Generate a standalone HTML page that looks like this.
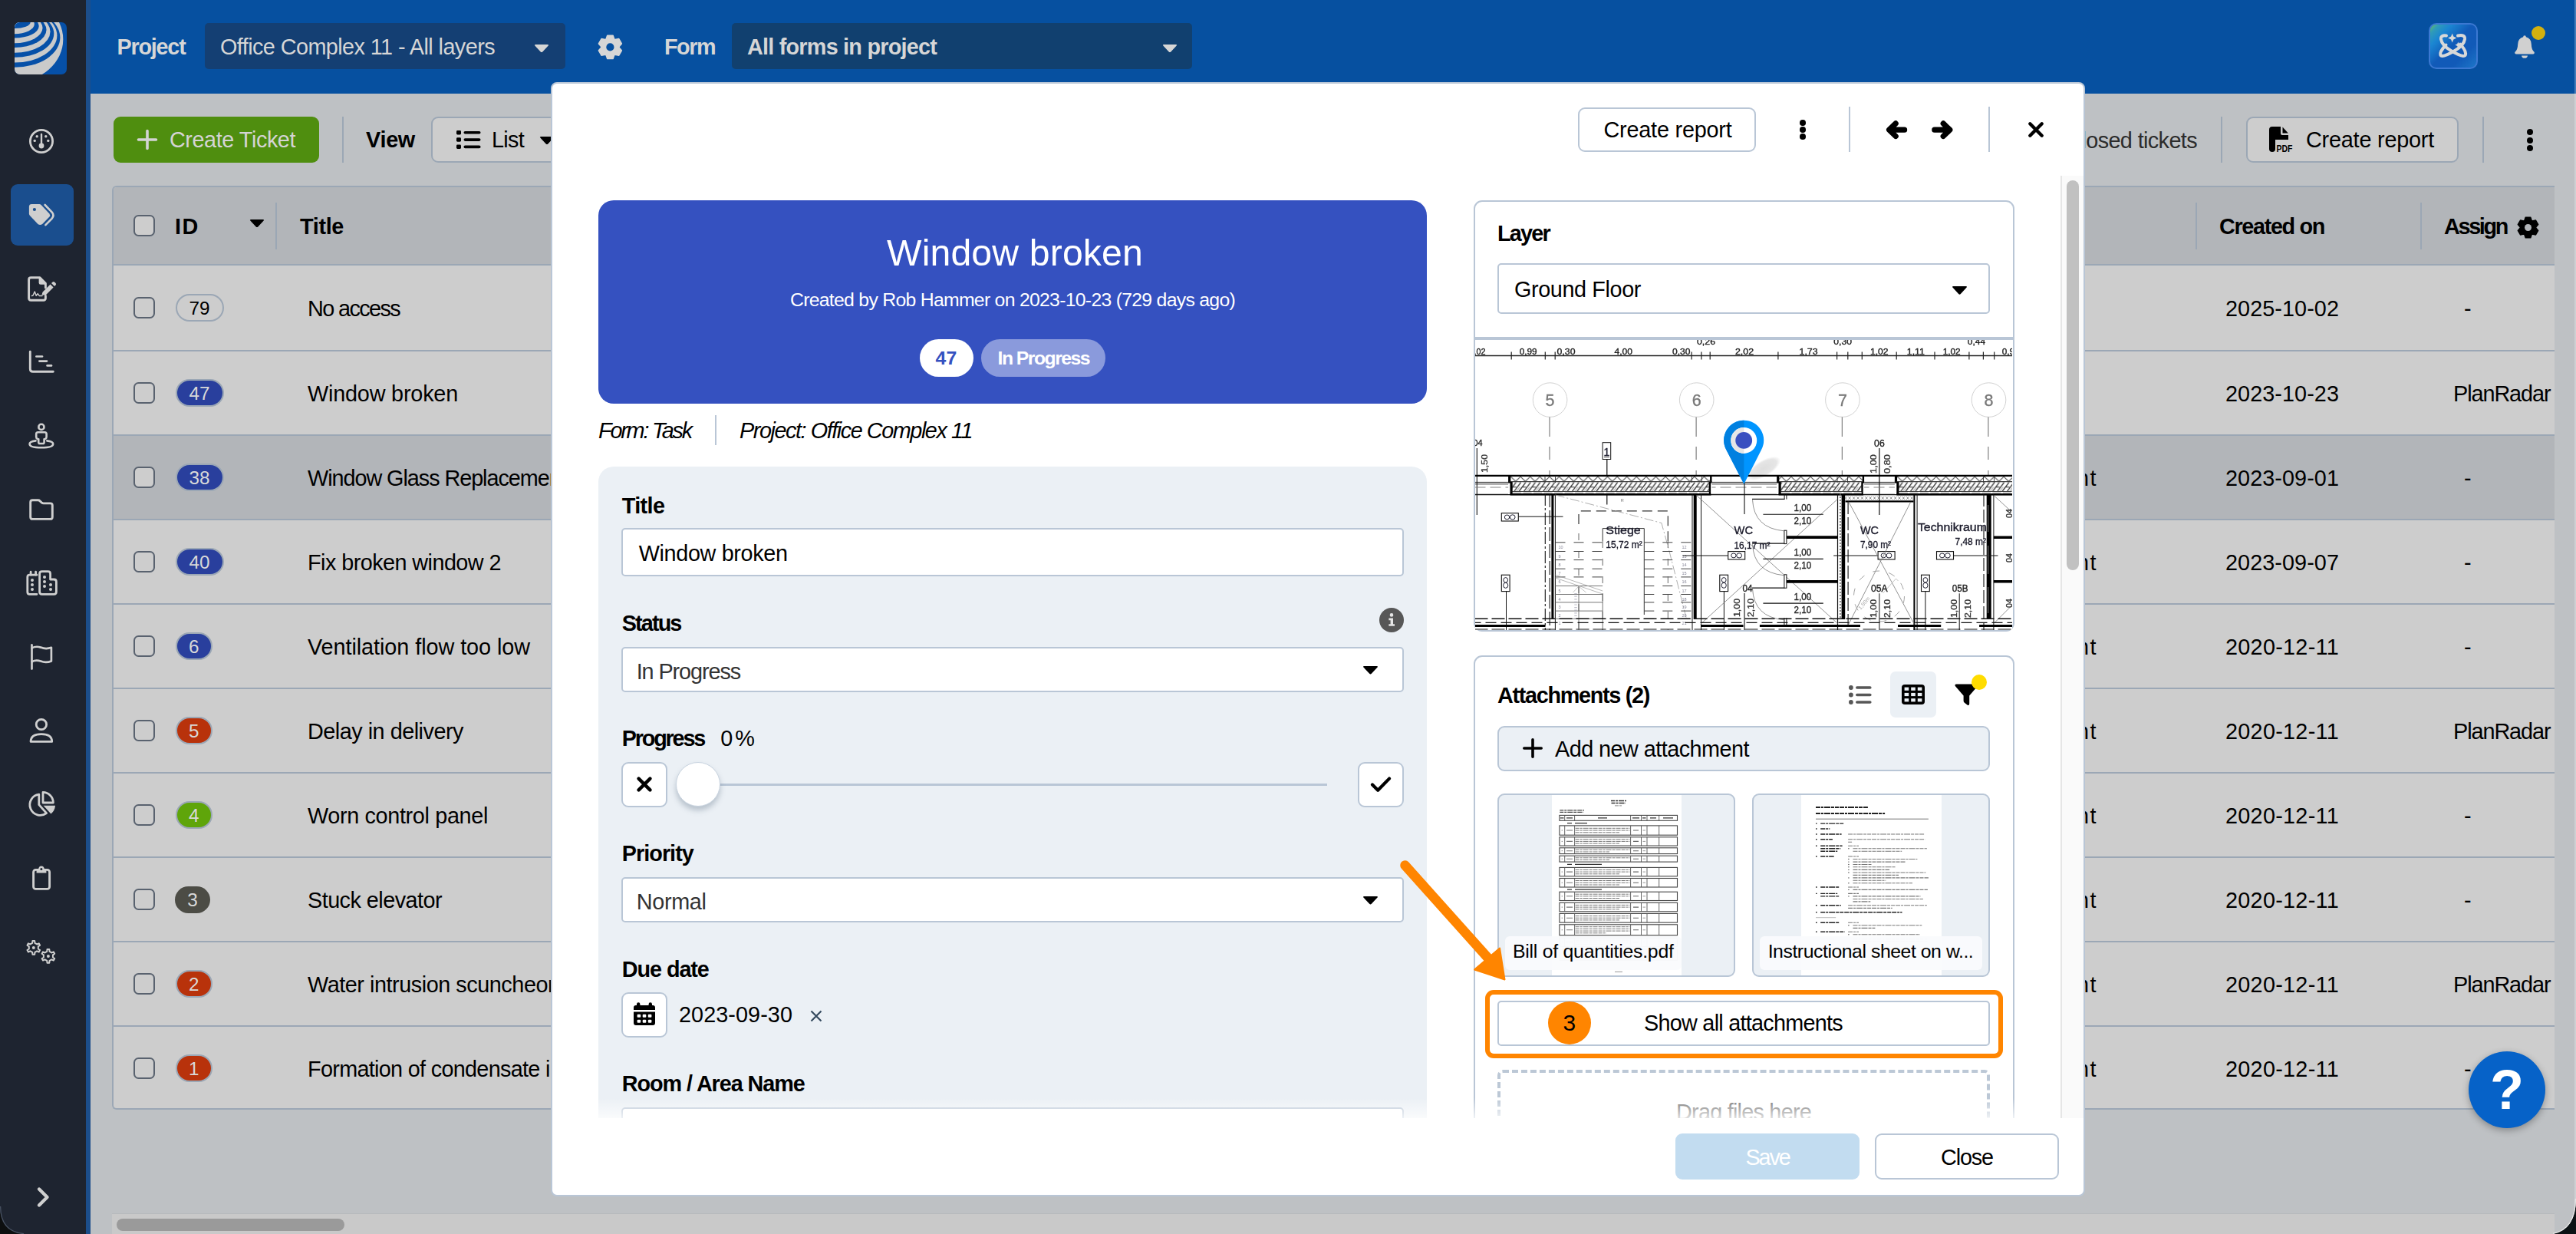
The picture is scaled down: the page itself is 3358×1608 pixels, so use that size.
<!DOCTYPE html>
<html><head><meta charset="utf-8"><title>Tickets</title>
<style>
html,body{margin:0;padding:0;}
body{width:3358px;height:1608px;overflow:hidden;position:relative;background:#bec1c4;font-family:"Liberation Sans", sans-serif;}
.a{position:absolute;box-sizing:border-box;}
.t{white-space:nowrap;}
svg{overflow:visible;}
</style></head><body>
<div class="a " style="left:118px;top:0px;width:3240px;height:122px;background:#0650a0;"></div>
<div class="a " style="left:148px;top:152px;width:268px;height:60px;background:#4f8e0f;border-radius:9px;"></div>
<svg class="a" style="left:179px;top:169px;" width="26" height="26" viewBox="0 0 26 26"><path d="M13 1.5V24.5M1.5 13H24.5" stroke="#d4d4d4" stroke-width="3.6" stroke-linecap="round"/></svg>
<span class="a t" id="t1" style="top:166.44px;font-size:28.8px;line-height:32.170px;color:#d4d4d4;left:221px;letter-spacing:-0.435px;">Create Ticket</span>
<div class="a " style="left:446px;top:152px;width:2px;height:60px;background:#9ba7b5;"></div>
<span class="a t" id="t2" style="top:166.44px;font-size:28.8px;line-height:32.170px;color:#000;left:477px;font-weight:700;letter-spacing:-0.277px;">View</span>
<div class="a " style="left:562px;top:152px;width:200px;height:60px;background:#cdcdcd;border:2px solid #9ba7b5;border-radius:9px;"></div>
<svg class="a" style="left:595px;top:169px;" width="32" height="26" viewBox="0 0 32 26"><g fill="#000"><rect x="0" y="1" width="6" height="5.4" rx="1.4"/><rect x="0" y="10.3" width="6" height="5.4" rx="1.4"/><rect x="0" y="19.6" width="6" height="5.4" rx="1.4"/><rect x="9.5" y="1.9" width="22" height="3.7" rx="1.8"/><rect x="9.5" y="11.2" width="22" height="3.7" rx="1.8"/><rect x="9.5" y="20.5" width="22" height="3.7" rx="1.8"/></g></svg>
<span class="a t" id="t3" style="top:166.44px;font-size:28.8px;line-height:32.170px;color:#000;left:641px;letter-spacing:-0.703px;">List</span>
<svg class="a" style="left:703px;top:177px;" width="20" height="12" viewBox="0 0 20 12"><path d="M2.2 1 H17.8 Q20 1 18.5 2.7 L11.3 10.4 Q10 11.8 8.7 10.4 L1.5 2.7 Q0 1 2.2 1Z" fill="#000"/></svg>
<span class="a t" id="t4" style="top:166.74px;font-size:28.8px;line-height:32.170px;color:#2c2c2c;left:2693.3px;letter-spacing:-0.611px;">Closed tickets</span>
<div class="a " style="left:2895px;top:152px;width:2px;height:60px;background:#9ba7b5;"></div>
<div class="a " style="left:2928px;top:152px;width:277px;height:60px;background:#cdcdcd;border:2px solid #9ba7b5;border-radius:9px;"></div>
<svg class="a" style="left:2958px;top:165px;" width="31" height="34" viewBox="0 0 31 34"><path d="M0 4 Q0 0 4 0 H15 V9 Q15 11 17 11 H25 V17 H0Z" fill="#000"/><path d="M17.5 0.5 L24.8 8.5 H17.5Z" fill="#000"/><path d="M0 17 H8 V29 Q8 33 4 33 Q0 33 0 29Z" fill="#000"/><text x="9.5" y="33" font-family="Liberation Sans, sans-serif" font-weight="700" font-size="13.5" fill="#000" textLength="21" lengthAdjust="spacingAndGlyphs">PDF</text></svg>
<span class="a t" id="t5" style="top:166.44px;font-size:28.8px;line-height:32.170px;color:#000;left:3006px;letter-spacing:-0.206px;">Create report</span>
<div class="a " style="left:3236px;top:152px;width:2px;height:60px;background:#9ba7b5;"></div>
<div class="a " style="left:3294px;top:168px;width:8px;height:8px;background:#000;border-radius:4px;"></div>
<div class="a " style="left:3294px;top:178.5px;width:8px;height:8px;background:#000;border-radius:4px;"></div>
<div class="a " style="left:3294px;top:189px;width:8px;height:8px;background:#000;border-radius:4px;"></div>
<div class="a " style="left:146px;top:242px;width:3184px;height:1204px;background:#cdcdcd;border:2px solid #9ba7b5;border-radius:6px 0 0 6px;border-right:none;overflow:hidden;"></div>
<div class="a " style="left:148px;top:244px;width:3182px;height:100px;background:#b2b5b9;border-radius:4px 0 0 0;"></div>
<div class="a " style="left:148px;top:344px;width:3182px;height:2px;background:#9ba7b5;"></div>
<div class="a " style="left:174.2px;top:280.2px;width:27.6px;height:27.6px;background:#cdcdcd;border:2px solid #59626f;border-radius:6.5px;"></div>
<span class="a t" id="t6" style="top:278.94px;font-size:28.8px;line-height:32.170px;color:#000;left:228px;font-weight:700;letter-spacing:1.594px;">ID</span>
<svg class="a" style="left:325px;top:285px;" width="20" height="12" viewBox="0 0 20 12"><path d="M2.2 1 H17.8 Q20 1 18.5 2.7 L11.3 10.4 Q10 11.8 8.7 10.4 L1.5 2.7 Q0 1 2.2 1Z" fill="#000"/></svg>
<div class="a " style="left:359px;top:264px;width:2px;height:61px;background:#9ba7b5;"></div>
<span class="a t" id="t7" style="top:278.94px;font-size:28.8px;line-height:32.170px;color:#000;left:391px;font-weight:700;letter-spacing:-0.338px;">Title</span>
<div class="a " style="left:2862px;top:264px;width:2px;height:61px;background:#9ba7b5;"></div>
<span class="a t" id="t8" style="top:278.94px;font-size:28.8px;line-height:32.170px;color:#000;left:2893px;font-weight:700;letter-spacing:-1.342px;">Created on</span>
<div class="a " style="left:3155px;top:264px;width:2px;height:61px;background:#9ba7b5;"></div>
<span class="a t" id="t9" style="top:278.94px;font-size:28.8px;line-height:32.170px;color:#000;left:3186px;font-weight:700;letter-spacing:-2.336px;">Assign</span>
<svg class="a" style="left:3281px;top:281.5px;" width="29" height="29" viewBox="0 0 100 100"><path d="M33.9 18.3 L38.9 3.8 L61.1 3.8 L66.1 18.3 L69.4 20.3 L84.5 17.3 L95.5 36.5 L85.4 48.1 L85.4 51.9 L95.5 63.5 L84.5 82.7 L69.4 79.7 L66.1 81.7 L61.1 96.2 L38.9 96.2 L33.9 81.7 L30.6 79.7 L15.5 82.7 L4.5 63.5 L14.6 51.9 L14.6 48.1 L4.5 36.5 L15.5 17.3 L30.6 20.3Z" fill="#000" stroke="#000" stroke-width="5" stroke-linejoin="round"/><circle cx="50" cy="50" r="15.5" fill="#b2b5b9"/></svg>
<div class="a " style="left:148px;top:456px;width:3182px;height:2px;background:#9ba7b5;"></div>
<div class="a " style="left:174.2px;top:387.2px;width:27.6px;height:27.6px;background:#cdcdcd;border:2px solid #59626f;border-radius:6.5px;"></div>
<div class="a " style="left:228.5px;top:382.8px;width:63px;height:36.4px;background:#cdcdcd;border:2px solid #9ba7b5;border-radius:18.5px;"></div>
<span class="a t" id="t10" style="top:388.01px;font-size:24.3px;line-height:27.143px;color:#000;left:260px;transform:translateX(-50%);">79</span>
<span class="a t" id="t11" style="top:385.54px;font-size:28.8px;line-height:32.170px;color:#000;left:401px;letter-spacing:-1.604px;">No access</span>
<span class="a t" id="t12" style="top:385.54px;font-size:28.8px;line-height:32.170px;color:#000;left:2901px;letter-spacing:0.069px;">2025-10-02</span>
<span class="a t" id="t13" style="top:385.54px;font-size:28.8px;line-height:32.170px;color:#000;left:3212px;letter-spacing:-1.594px;">-</span>
<div class="a " style="left:148px;top:566px;width:3182px;height:2px;background:#9ba7b5;"></div>
<div class="a " style="left:174.2px;top:498.2px;width:27.6px;height:27.6px;background:#cdcdcd;border:2px solid #59626f;border-radius:6.5px;"></div>
<div class="a " style="left:228.5px;top:493.8px;width:63px;height:36.4px;background:#293f9d;border:2px solid #9ba7b5;border-radius:18.5px;"></div>
<span class="a t" id="t14" style="top:499.01px;font-size:24.3px;line-height:27.143px;color:#d8d8d8;left:260px;transform:translateX(-50%);">47</span>
<span class="a t" id="t15" style="top:496.54px;font-size:28.8px;line-height:32.170px;color:#000;left:401px;letter-spacing:-0.191px;">Window broken</span>
<span class="a t" id="t16" style="top:496.54px;font-size:28.8px;line-height:32.170px;color:#000;left:2901px;letter-spacing:0.069px;">2023-10-23</span>
<span class="a t" id="t17" style="top:496.54px;font-size:28.8px;line-height:32.170px;color:#000;left:3198px;letter-spacing:-1.064px;">PlanRadar</span>
<div class="a " style="left:148px;top:568px;width:3182px;height:108px;background:#b2b5b9;"></div>
<div class="a " style="left:148px;top:676px;width:3182px;height:2px;background:#9ba7b5;"></div>
<div class="a " style="left:174.2px;top:608.2px;width:27.6px;height:27.6px;background:#cdcdcd;border:2px solid #59626f;border-radius:6.5px;"></div>
<div class="a " style="left:228.5px;top:603.8px;width:63px;height:36.4px;background:#293f9d;border:2px solid #9ba7b5;border-radius:18.5px;"></div>
<span class="a t" id="t18" style="top:609.01px;font-size:24.3px;line-height:27.143px;color:#d8d8d8;left:260px;transform:translateX(-50%);">38</span>
<span class="a t" style="top:606.54px;font-size:28.8px;line-height:32.170px;color:#000;left:401px;letter-spacing:-1.046px;"><span id="t19">Window Glass Replaceme</span>nt</span>
<span class="a t" id="t20" style="top:606.54px;font-size:28.8px;line-height:32.170px;color:#000;left:2707px;letter-spacing:1.484px;">nt</span>
<span class="a t" id="t21" style="top:606.54px;font-size:28.8px;line-height:32.170px;color:#000;left:2901px;letter-spacing:0.069px;">2023-09-01</span>
<span class="a t" id="t22" style="top:606.54px;font-size:28.8px;line-height:32.170px;color:#000;left:3212px;letter-spacing:-1.594px;">-</span>
<div class="a " style="left:148px;top:786px;width:3182px;height:2px;background:#9ba7b5;"></div>
<div class="a " style="left:174.2px;top:718.2px;width:27.6px;height:27.6px;background:#cdcdcd;border:2px solid #59626f;border-radius:6.5px;"></div>
<div class="a " style="left:228.5px;top:713.8px;width:63px;height:36.4px;background:#293f9d;border:2px solid #9ba7b5;border-radius:18.5px;"></div>
<span class="a t" id="t23" style="top:719.01px;font-size:24.3px;line-height:27.143px;color:#d8d8d8;left:260px;transform:translateX(-50%);">40</span>
<span class="a t" id="t24" style="top:716.54px;font-size:28.8px;line-height:32.170px;color:#000;left:401px;letter-spacing:-0.553px;">Fix broken window 2</span>
<span class="a t" id="t25" style="top:716.54px;font-size:28.8px;line-height:32.170px;color:#000;left:2707px;letter-spacing:1.484px;">nt</span>
<span class="a t" id="t26" style="top:716.54px;font-size:28.8px;line-height:32.170px;color:#000;left:2901px;letter-spacing:0.069px;">2023-09-07</span>
<span class="a t" id="t27" style="top:716.54px;font-size:28.8px;line-height:32.170px;color:#000;left:3212px;letter-spacing:-1.594px;">-</span>
<div class="a " style="left:148px;top:896px;width:3182px;height:2px;background:#9ba7b5;"></div>
<div class="a " style="left:174.2px;top:828.2px;width:27.6px;height:27.6px;background:#cdcdcd;border:2px solid #59626f;border-radius:6.5px;"></div>
<div class="a " style="left:228.5px;top:823.8px;width:48.5px;height:36.4px;background:#293f9d;border:2px solid #9ba7b5;border-radius:18.5px;"></div>
<span class="a t" id="t28" style="top:829.01px;font-size:24.3px;line-height:27.143px;color:#d8d8d8;left:252.75px;transform:translateX(-50%);">6</span>
<span class="a t" id="t29" style="top:826.54px;font-size:28.8px;line-height:32.170px;color:#000;left:401px;letter-spacing:-0.056px;">Ventilation flow too low</span>
<span class="a t" id="t30" style="top:826.54px;font-size:28.8px;line-height:32.170px;color:#000;left:2707px;letter-spacing:1.484px;">nt</span>
<span class="a t" id="t31" style="top:826.54px;font-size:28.8px;line-height:32.170px;color:#000;left:2901px;letter-spacing:0.283px;">2020-12-11</span>
<span class="a t" id="t32" style="top:826.54px;font-size:28.8px;line-height:32.170px;color:#000;left:3212px;letter-spacing:-1.594px;">-</span>
<div class="a " style="left:148px;top:1006px;width:3182px;height:2px;background:#9ba7b5;"></div>
<div class="a " style="left:174.2px;top:938.2px;width:27.6px;height:27.6px;background:#cdcdcd;border:2px solid #59626f;border-radius:6.5px;"></div>
<div class="a " style="left:228.5px;top:933.8px;width:48.5px;height:36.4px;background:#b8320b;border:2px solid #9ba7b5;border-radius:18.5px;"></div>
<span class="a t" id="t33" style="top:939.01px;font-size:24.3px;line-height:27.143px;color:#d8d8d8;left:252.75px;transform:translateX(-50%);">5</span>
<span class="a t" id="t34" style="top:936.54px;font-size:28.8px;line-height:32.170px;color:#000;left:401px;letter-spacing:-0.487px;">Delay in delivery</span>
<span class="a t" id="t35" style="top:936.54px;font-size:28.8px;line-height:32.170px;color:#000;left:2707px;letter-spacing:1.484px;">nt</span>
<span class="a t" id="t36" style="top:936.54px;font-size:28.8px;line-height:32.170px;color:#000;left:2901px;letter-spacing:0.283px;">2020-12-11</span>
<span class="a t" id="t37" style="top:936.54px;font-size:28.8px;line-height:32.170px;color:#000;left:3198px;letter-spacing:-1.064px;">PlanRadar</span>
<div class="a " style="left:148px;top:1116px;width:3182px;height:2px;background:#9ba7b5;"></div>
<div class="a " style="left:174.2px;top:1048.2px;width:27.6px;height:27.6px;background:#cdcdcd;border:2px solid #59626f;border-radius:6.5px;"></div>
<div class="a " style="left:228.5px;top:1043.8px;width:48.5px;height:36.4px;background:#5fa50a;border:2px solid #9ba7b5;border-radius:18.5px;"></div>
<span class="a t" id="t38" style="top:1049.01px;font-size:24.3px;line-height:27.143px;color:#d8d8d8;left:252.75px;transform:translateX(-50%);">4</span>
<span class="a t" id="t39" style="top:1046.54px;font-size:28.8px;line-height:32.170px;color:#000;left:401px;letter-spacing:-0.344px;">Worn control panel</span>
<span class="a t" id="t40" style="top:1046.54px;font-size:28.8px;line-height:32.170px;color:#000;left:2707px;letter-spacing:1.484px;">nt</span>
<span class="a t" id="t41" style="top:1046.54px;font-size:28.8px;line-height:32.170px;color:#000;left:2901px;letter-spacing:0.283px;">2020-12-11</span>
<span class="a t" id="t42" style="top:1046.54px;font-size:28.8px;line-height:32.170px;color:#000;left:3212px;letter-spacing:-1.594px;">-</span>
<div class="a " style="left:148px;top:1226px;width:3182px;height:2px;background:#9ba7b5;"></div>
<div class="a " style="left:174.2px;top:1158.2px;width:27.6px;height:27.6px;background:#cdcdcd;border:2px solid #59626f;border-radius:6.5px;"></div>
<div class="a " style="left:228px;top:1154.5px;width:46px;height:35px;background:#4c4c45;border-radius:17.5px;"></div>
<span class="a t" id="t43" style="top:1159.01px;font-size:24.3px;line-height:27.143px;color:#d8d8d8;left:251px;transform:translateX(-50%);">3</span>
<span class="a t" id="t44" style="top:1156.54px;font-size:28.8px;line-height:32.170px;color:#000;left:401px;letter-spacing:-0.535px;">Stuck elevator</span>
<span class="a t" id="t45" style="top:1156.54px;font-size:28.8px;line-height:32.170px;color:#000;left:2707px;letter-spacing:1.484px;">nt</span>
<span class="a t" id="t46" style="top:1156.54px;font-size:28.8px;line-height:32.170px;color:#000;left:2901px;letter-spacing:0.283px;">2020-12-11</span>
<span class="a t" id="t47" style="top:1156.54px;font-size:28.8px;line-height:32.170px;color:#000;left:3212px;letter-spacing:-1.594px;">-</span>
<div class="a " style="left:148px;top:1336px;width:3182px;height:2px;background:#9ba7b5;"></div>
<div class="a " style="left:174.2px;top:1268.2px;width:27.6px;height:27.6px;background:#cdcdcd;border:2px solid #59626f;border-radius:6.5px;"></div>
<div class="a " style="left:228.5px;top:1263.8px;width:48.5px;height:36.4px;background:#b8320b;border:2px solid #9ba7b5;border-radius:18.5px;"></div>
<span class="a t" id="t48" style="top:1269.01px;font-size:24.3px;line-height:27.143px;color:#d8d8d8;left:252.75px;transform:translateX(-50%);">2</span>
<span class="a t" style="top:1266.54px;font-size:28.8px;line-height:32.170px;color:#000;left:401px;letter-spacing:-0.452px;"><span id="t49">Water intrusion scuncheo</span>n</span>
<span class="a t" id="t50" style="top:1266.54px;font-size:28.8px;line-height:32.170px;color:#000;left:2707px;letter-spacing:1.484px;">nt</span>
<span class="a t" id="t51" style="top:1266.54px;font-size:28.8px;line-height:32.170px;color:#000;left:2901px;letter-spacing:0.283px;">2020-12-11</span>
<span class="a t" id="t52" style="top:1266.54px;font-size:28.8px;line-height:32.170px;color:#000;left:3198px;letter-spacing:-1.064px;">PlanRadar</span>
<div class="a " style="left:174.2px;top:1378.2px;width:27.6px;height:27.6px;background:#cdcdcd;border:2px solid #59626f;border-radius:6.5px;"></div>
<div class="a " style="left:228.5px;top:1373.8px;width:48.5px;height:36.4px;background:#b8320b;border:2px solid #9ba7b5;border-radius:18.5px;"></div>
<span class="a t" id="t53" style="top:1379.01px;font-size:24.3px;line-height:27.143px;color:#d8d8d8;left:252.75px;transform:translateX(-50%);">1</span>
<span class="a t" style="top:1376.54px;font-size:28.8px;line-height:32.170px;color:#000;left:401px;letter-spacing:-0.690px;"><span id="t54">Formation of condensate i</span>n the</span>
<span class="a t" id="t55" style="top:1376.54px;font-size:28.8px;line-height:32.170px;color:#000;left:2707px;letter-spacing:1.484px;">nt</span>
<span class="a t" id="t56" style="top:1376.54px;font-size:28.8px;line-height:32.170px;color:#000;left:2901px;letter-spacing:0.283px;">2020-12-11</span>
<span class="a t" id="t57" style="top:1376.54px;font-size:28.8px;line-height:32.170px;color:#000;left:3212px;letter-spacing:-1.594px;">-</span>
<div class="a " style="left:146px;top:1581px;width:3184px;height:27px;background:#c9c9c9;border-top:1px solid #b6b9bc;"></div>
<div class="a " style="left:152px;top:1588px;width:297px;height:16px;background:#9a9a9a;border-radius:8px;"></div>
<div class="a " style="left:3218px;top:1370px;width:100px;height:100px;background:#0662c8;border-radius:50px;box-shadow:0 3px 10px rgba(0,0,0,.3);"></div>
<span class="a t" id="t58" style="top:1379.84px;font-size:72px;line-height:80.424px;color:#fff;left:3268px;transform:translateX(-50%);font-weight:700;">?</span>
<div class="a " style="left:0px;top:0px;width:112px;height:1608px;background:#1e2430;"></div>
<div class="a " style="left:112px;top:0px;width:6px;height:1608px;background:#1c4e8b;"></div>
<div class="a " style="left:14px;top:240px;width:82px;height:80px;background:#1a4e8e;border-radius:9px;"></div>
<svg class="a" style="left:19px;top:29px;" width="68" height="68" viewBox="0 0 68 68"><defs><clipPath id="lg"><rect x="0" y="0" width="68" height="68" rx="7"/></clipPath></defs><g clip-path="url(#lg)"><rect width="68" height="68" fill="#0650a8"/><ellipse cx="0" cy="22.3" rx="63.3" ry="55.4" fill="#cacaca"/><ellipse cx="0" cy="19.8" rx="59.4" ry="39" fill="#0650a8"/><ellipse cx="0" cy="17.3" rx="55.4" ry="35.3" fill="#cacaca"/><ellipse cx="0" cy="14.8" rx="51.3" ry="31" fill="#0650a8"/><ellipse cx="0" cy="12.3" rx="46.5" ry="27.5" fill="#cacaca"/><ellipse cx="0" cy="10" rx="41.5" ry="23" fill="#0650a8"/><ellipse cx="0" cy="7.5" rx="36.5" ry="19.8" fill="#cacaca"/><ellipse cx="0" cy="5" rx="31.7" ry="15.5" fill="#0650a8"/><ellipse cx="0" cy="2.5" rx="25.8" ry="12.7" fill="#cacaca"/><ellipse cx="0" cy="0" rx="20.7" ry="8.0" fill="#0650a8"/></g></svg>
<svg class="a" style="left:36px;top:166px;" width="36" height="36" viewBox="0 0 36 36"><g fill="none" stroke="#cfcfcf"><circle cx="18" cy="18" r="14.6" stroke-width="2.8"/><path d="M18 9V22" stroke-width="2.4" stroke-linecap="round"/></g><g fill="#cfcfcf"><circle cx="18" cy="24" r="3.4"/><circle cx="9.2" cy="17.4" r="1.7"/><circle cx="12.2" cy="11.7" r="1.7"/><circle cx="23.8" cy="11.7" r="1.7"/><circle cx="26.8" cy="17.4" r="1.7"/></g></svg>
<svg class="a" style="left:30px;top:260px;" width="48" height="40" viewBox="0 0 48 40"><path d="M7.9 9.4 Q7.9 6 11.3 6 H21.3 Q22.6 6 23.6 7 L34.4 18.6 Q36 20.6 34.4 22.6 L25.2 32 Q22.3 34.2 19.4 32 L9 21 Q7.9 19.8 7.9 18.3Z" fill="#cfcfcf"/><circle cx="14.9" cy="13" r="2.1" fill="#1a4e8e"/><path d="M28.6 7 L37.8 16.6 Q41.2 20.6 37.6 24.8 L29.4 33.2" fill="none" stroke="#cfcfcf" stroke-width="2.6" stroke-linecap="round"/></svg>
<svg class="a" style="left:30px;top:355px;" width="48" height="42" viewBox="0 0 48 42"><g fill="none" stroke="#cfcfcf" stroke-width="2.9" stroke-linejoin="round" stroke-linecap="round"><path d="M29.4 30.5 V33.5 Q29.4 36.2 26.7 36.2 H10.3 Q7.6 36.2 7.6 33.5 V9.5 Q7.6 6.8 10.3 6.8 H22 L29.4 14.2 V20"/></g><path d="M20.6 6.8 H22 L29.4 14.2 V15.8 H23 Q20.6 15.8 20.6 13.4Z" fill="#cfcfcf"/><path d="M11.5 30.5 L13 30 L15.2 25 L17.2 30.2 L19.2 27.6 L21.2 30.4 H25" fill="none" stroke="#cfcfcf" stroke-width="1.5" stroke-linejoin="round" stroke-linecap="round"/><path d="M24.4 29.6 L25.6 25.4 L35.6 15.4 L39.6 19.4 L29.6 29.4Z M37 14 L38.6 12.4 Q39.8 11.4 41 12.4 L42.6 14 Q43.6 15.2 42.6 16.4 L41 18Z" fill="#cfcfcf"/></svg>
<svg class="a" style="left:30px;top:450px;" width="48" height="42" viewBox="0 0 48 42"><path d="M9.3 8.2 V30.8 Q9.3 34.3 12.8 34.3 H39.3" fill="none" stroke="#cfcfcf" stroke-width="2.9" stroke-linecap="round"/><g stroke="#cfcfcf" stroke-width="2.7" stroke-linecap="round"><path d="M17.4 14.5H25"/><path d="M21.4 20.6H31"/><path d="M31.6 26.4H37"/></g></svg>
<svg class="a" style="left:30px;top:545px;" width="48" height="42" viewBox="0 0 48 42"><g fill="none" stroke="#cfcfcf" stroke-width="2.6"><circle cx="23.9" cy="11.4" r="3.6"/><path d="M19.6 18.2 H28.2 Q30.6 18.2 30.6 20.6 V24.6 Q30.6 26.4 28.8 27 L27.6 27.4 V31.2 Q27.6 33 25.8 33 H22 Q20.2 33 20.2 31.2 V27.4 L19 27 Q17.2 26.4 17.2 24.6 V20.6 Q17.2 18.2 19.6 18.2Z"/><path d="M16.5 29.4 Q8.6 30.4 8.6 33.4 Q8.6 38.2 23.9 38.2 Q39.2 38.2 39.2 33.4 Q39.2 30.4 31.3 29.4" stroke-linecap="round"/></g></svg>
<svg class="a" style="left:30px;top:640px;" width="48" height="42" viewBox="0 0 48 42"><path d="M12.4 11.8 H19.8 Q21 11.8 21.8 12.6 L24.6 15.2 Q25.4 15.9 26.6 15.9 H35.6 Q38.3 15.9 38.3 18.6 V33.7 Q38.3 36.4 35.6 36.4 H12.4 Q9.7 36.4 9.7 33.7 V14.5 Q9.7 11.8 12.4 11.8Z" fill="none" stroke="#cfcfcf" stroke-width="2.9" stroke-linejoin="round"/></svg>
<svg class="a" style="left:30px;top:738px;" width="48" height="42" viewBox="0 0 48 42"><g fill="none" stroke="#cfcfcf" stroke-width="2.8" stroke-linejoin="round" stroke-linecap="round"><path d="M18 36.3 H8.6 Q5.8 36.3 5.8 33.5 V14 Q5.8 11.2 8.6 11.2 H18"/><path d="M10.1 11V7.2M16.6 11V7.2"/><path d="M24.6 6.6 H32.6 Q35.6 6.6 35.6 9.6 V17 H40.4 Q43.4 17 43.4 20 V33.3 Q43.4 36.3 40.4 36.3 H24.6 Q21.6 36.3 21.6 33.3 V9.6 Q21.6 6.6 24.6 6.6Z"/></g><g fill="#cfcfcf"><circle cx="12" cy="18.1" r="2"/><circle cx="12" cy="24.1" r="2"/><circle cx="12" cy="30.1" r="2"/><circle cx="28" cy="13.9" r="2"/><circle cx="28" cy="20" r="2"/><circle cx="28" cy="26" r="2"/><circle cx="36" cy="24" r="2"/><circle cx="36" cy="30" r="2"/></g></svg>
<svg class="a" style="left:30px;top:834px;" width="48" height="42" viewBox="0 0 48 42"><g fill="none" stroke="#cfcfcf" stroke-width="2.7" stroke-linecap="round" stroke-linejoin="round"><path d="M11.5 6.4V37.6"/><path d="M11.5 10.4 Q17 7.6 23 9.6 Q30 12.4 36.9 9.8 V27.4 Q30 30.4 23 27.6 Q17 25.2 11.5 28.2"/></g></svg>
<svg class="a" style="left:30px;top:930px;" width="48" height="42" viewBox="0 0 48 42"><g fill="none" stroke="#cfcfcf" stroke-width="2.8" stroke-linejoin="round"><circle cx="23.9" cy="14" r="6.7"/><path d="M10.1 36.4 Q10.1 26.7 23.9 26.7 Q37.7 26.7 37.7 36.4Z"/></g></svg>
<svg class="a" style="left:30px;top:1026px;" width="48" height="46" viewBox="0 0 48 46"><g fill="none" stroke="#cfcfcf" stroke-width="2.8" stroke-linejoin="round"><path d="M20.8 9.2 A13.6 13.6 0 1 0 30.6 33.6 L20.8 22.6Z"/><path d="M26 6.4 A13.6 13.6 0 0 1 39.4 20 H26Z"/></g><path d="M26.6 23.8 H42 Q41.6 30.2 36.4 34.6Z" fill="#cfcfcf"/></svg>
<svg class="a" style="left:30px;top:1120px;" width="48" height="46" viewBox="0 0 48 46"><rect x="13.6" y="13.4" width="21" height="25" rx="3" fill="none" stroke="#cfcfcf" stroke-width="2.9"/><path d="M17.6 17.6 V13.6 H19.8 Q20.4 8.4 23.9 8.4 Q27.6 8.4 28.2 13.6 H30.4 V17.6Z" fill="#cfcfcf"/><circle cx="23.9" cy="12.6" r="1.5" fill="#1e2430"/></svg>
<svg class="a" style="left:24px;top:1218px;" width="56" height="44" viewBox="0 0 56 44"><g fill="none" stroke="#cfcfcf" stroke-width="2" stroke-linejoin="round"><path d="M18.13 10.93 L18.41 8.11 L21.19 8.11 L21.47 10.93 L24.14 12.47 L26.72 11.30 L28.11 13.71 L25.81 15.36 L25.81 18.44 L28.11 20.09 L26.72 22.50 L24.14 21.33 L21.47 22.87 L21.19 25.69 L18.41 25.69 L18.13 22.87 L15.46 21.33 L12.88 22.50 L11.49 20.09 L13.79 18.44 L13.79 15.36 L11.49 13.71 L12.88 11.30 L15.46 12.47Z"/><path d="M37.23 21.93 L37.51 19.11 L40.29 19.11 L40.57 21.93 L43.24 23.47 L45.82 22.30 L47.21 24.71 L44.91 26.36 L44.91 29.44 L47.21 31.09 L45.82 33.50 L43.24 32.33 L40.57 33.87 L40.29 36.69 L37.51 36.69 L37.23 33.87 L34.56 32.33 L31.98 33.50 L30.59 31.09 L32.89 29.44 L32.89 26.36 L30.59 24.71 L31.98 22.30 L34.56 23.47Z"/></g><circle cx="19.8" cy="16.9" r="2" fill="#cfcfcf"/><circle cx="38.9" cy="27.9" r="2" fill="#cfcfcf"/></svg>
<svg class="a" style="left:44px;top:1544px;" width="26" height="32" viewBox="0 0 26 32"><path d="M7 5.5 L17.5 16 L7 26.5" fill="none" stroke="#d0d0d0" stroke-width="4.4" stroke-linecap="round" stroke-linejoin="round"/></svg>
<span class="a t" id="t59" style="top:44.94px;font-size:28.8px;line-height:32.170px;color:#d6d6d6;left:152.5px;font-weight:700;letter-spacing:-1.234px;">Project</span>
<div class="a " style="left:267px;top:30px;width:470px;height:60px;background:#143f73;border-radius:5px;"></div>
<span class="a t" id="t60" style="top:44.94px;font-size:28.8px;line-height:32.170px;color:#d6d6d6;left:287px;letter-spacing:-0.568px;">Office Complex 11 - All layers</span>
<svg class="a" style="left:695.5px;top:57px;" width="20" height="12" viewBox="0 0 20 12"><path d="M2.2 1 H17.8 Q20 1 18.5 2.7 L11.3 10.4 Q10 11.8 8.7 10.4 L1.5 2.7 Q0 1 2.2 1Z" fill="#d6d6d6"/></svg>
<svg class="a" style="left:778.6px;top:45.4px;" width="32.8" height="32.8" viewBox="0 0 100 100"><path d="M33.9 18.3 L38.9 3.8 L61.1 3.8 L66.1 18.3 L69.4 20.3 L84.5 17.3 L95.5 36.5 L85.4 48.1 L85.4 51.9 L95.5 63.5 L84.5 82.7 L69.4 79.7 L66.1 81.7 L61.1 96.2 L38.9 96.2 L33.9 81.7 L30.6 79.7 L15.5 82.7 L4.5 63.5 L14.6 51.9 L14.6 48.1 L4.5 36.5 L15.5 17.3 L30.6 20.3Z" fill="#d6d6d6" stroke="#d6d6d6" stroke-width="5" stroke-linejoin="round"/><circle cx="50" cy="50" r="15.5" fill="#0650a0"/></svg>
<span class="a t" id="t61" style="top:44.94px;font-size:28.8px;line-height:32.170px;color:#d6d6d6;left:866px;font-weight:700;letter-spacing:-1.500px;">Form</span>
<div class="a " style="left:954px;top:30px;width:600px;height:60px;background:#11406f;border-radius:5px;"></div>
<span class="a t" id="t62" style="top:44.94px;font-size:28.8px;line-height:32.170px;color:#d6d6d6;left:974px;font-weight:700;letter-spacing:-0.770px;">All forms in project</span>
<svg class="a" style="left:1514.5px;top:57px;" width="20" height="12" viewBox="0 0 20 12"><path d="M2.2 1 H17.8 Q20 1 18.5 2.7 L11.3 10.4 Q10 11.8 8.7 10.4 L1.5 2.7 Q0 1 2.2 1Z" fill="#d6d6d6"/></svg>
<div class="a " style="left:3166px;top:30px;width:64px;height:60px;border:2px solid #3b78d2;border-radius:10px;background:linear-gradient(135deg,#6cc05c 0%,#2f9bb8 10%,#1b86d2 24%,#115ab8 48%,#115ab8 72%,#1d76c8 100%);"></div>
<svg class="a" style="left:3178px;top:42px;" width="40" height="36" viewBox="0 0 40 36"><g fill="none" stroke="#d8d8d8" stroke-width="4" stroke-linecap="round"><path d="M11 4.5 Q3.5 3.5 4 9 Q5 17 17 24 Q28 30.5 33 31 Q37.5 31 35.5 25 Q34 21 29 15.5"/><path d="M26 4.5 Q35.5 2.5 35 9 Q34 17 22 24 Q10 31 6 31 Q1.5 30.5 4 25 Q6 21 10.5 16.5"/></g><path d="M18.7 1.6 L20.3 5.6 L24.3 7.6 L20.3 9.6 L18.7 13.6 L17.1 9.6 L13.1 7.6 L17.1 5.6Z M26.3 12.5 L27.4 15.3 L30.2 16.6 L27.4 17.9 L26.3 20.7 L25.2 17.9 L22.4 16.6 L25.2 15.3Z" fill="#d8d8d8"/></svg>
<svg class="a" style="left:3277px;top:45px;" width="28" height="32" viewBox="0 0 28 32"><path d="M14 1.2 Q15.8 1.2 15.9 3.2 Q22.6 4.8 22.8 12.6 Q23 19.6 26.3 22.6 Q27.2 23.6 26.5 24.8 Q26 25.6 25 25.6 H3 Q2 25.6 1.5 24.8 Q0.8 23.6 1.7 22.6 Q5 19.6 5.2 12.6 Q5.4 4.8 12.1 3.2 Q12.2 1.2 14 1.2Z M10 27.4 H18 Q17.6 30.8 14 30.8 Q10.4 30.8 10 27.4Z" fill="#d0d0d0"/></svg>
<div class="a " style="left:3300px;top:34px;width:18px;height:18px;background:#d3b00f;border-radius:9px;"></div>
<div class="a " style="left:717.8px;top:107px;width:2000px;height:1452px;background:#fff;border:2px solid #b9c6d6;border-radius:8px;"></div>
<div class="a " style="left:2057px;top:140px;width:232px;height:58px;background:#fff;border:2px solid #b9c6d6;border-radius:9px;"></div>
<span class="a t" id="t63" style="top:153.34px;font-size:28.8px;line-height:32.170px;color:#000;left:2090.5px;letter-spacing:-0.206px;">Create report</span>
<div class="a " style="left:2346.2px;top:156.2px;width:7.6px;height:7.6px;background:#000;border-radius:3.8px;"></div>
<div class="a " style="left:2346.2px;top:165.2px;width:7.6px;height:7.6px;background:#000;border-radius:3.8px;"></div>
<div class="a " style="left:2346.2px;top:174.4px;width:7.6px;height:7.6px;background:#000;border-radius:3.8px;"></div>
<div class="a " style="left:2410px;top:139px;width:2px;height:59px;background:#b9c6d6;"></div>
<svg class="a" style="left:2458px;top:157px;" width="28.4" height="24.4" viewBox="0 0 28.4 24.4"><path d="M13.2 3.9 L4.6 12.2 L13.2 20.5 M6 12.2 H24.6" fill="none" stroke="#000" stroke-width="7.2" stroke-linecap="round" stroke-linejoin="round"/></svg>
<svg class="a" style="left:2517.7px;top:157px;" width="28.4" height="24.4" viewBox="0 0 28.4 24.4"><path d="M15.2 3.9 L23.8 12.2 L15.2 20.5 M22.4 12.2 H3.8" fill="none" stroke="#000" stroke-width="7.2" stroke-linecap="round" stroke-linejoin="round"/></svg>
<div class="a " style="left:2592px;top:139px;width:2px;height:59px;background:#b9c6d6;"></div>
<svg class="a" style="left:2644px;top:159px;" width="20" height="20" viewBox="0 0 20 20"><path d="M2.3 2.3 L17.7 17.7 M17.7 2.3 L2.3 17.7" stroke="#000" stroke-width="4.4" stroke-linecap="round"/></svg>
<div class="a" style="left:720px;top:229px;width:1996px;height:1228px;overflow:hidden;">
<div class="a " style="left:1966px;top:0px;width:30px;height:1228px;background:#fafafa;border-left:2px solid #e6e6e6;"></div>
<div class="a " style="left:1974px;top:6px;width:16px;height:508px;background:#c1c1c1;border-radius:8px;"></div>
<div class="a " style="left:60px;top:32px;width:1080px;height:265px;background:#3551c0;border-radius:20px;"></div>
<span class="a t" id="t64" style="top:73.88px;font-size:48.2px;line-height:53.839px;color:#fff;left:603px;transform:translateX(-50%);letter-spacing:0.144px;">Window broken</span>
<span class="a t" id="t65" style="top:148.06px;font-size:24.8px;line-height:27.702px;color:#fff;left:600px;transform:translateX(-50%);letter-spacing:-0.723px;">Created by Rob Hammer on 2023-10-23 (729 days ago)</span>
<div class="a " style="left:479px;top:213px;width:70px;height:49px;background:#fff;border-radius:24.5px;"></div>
<span class="a t" id="t66" style="top:223.76px;font-size:24.8px;line-height:27.702px;color:#3551c0;left:513.6px;transform:translateX(-50%);font-weight:700;letter-spacing:0.203px;">47</span>
<div class="a " style="left:559px;top:213px;width:162px;height:49px;background:#8a9adc;border-radius:24.5px;"></div>
<span class="a t" id="t67" style="top:223.76px;font-size:24.8px;line-height:27.702px;color:#fff;left:640.3px;transform:translateX(-50%);font-weight:700;letter-spacing:-1.540px;">In Progress</span>
<span class="a t" id="t68" style="top:315.94px;font-size:28.8px;line-height:32.170px;color:#000;left:60px;font-style:italic;letter-spacing:-2.195px;">Form: Task</span>
<div class="a " style="left:212px;top:312px;width:2px;height:39px;background:#b9c6d6;"></div>
<span class="a t" id="t69" style="top:315.94px;font-size:28.8px;line-height:32.170px;color:#000;left:244px;font-style:italic;letter-spacing:-1.438px;">Project: Office Complex 11</span>
<div class="a " style="left:60px;top:379px;width:1080px;height:900px;background:#ebf0f5;border-radius:20px;"></div>
<span class="a t" id="t70" style="top:413.74px;font-size:28.8px;line-height:32.170px;color:#000;left:90.8px;font-weight:700;letter-spacing:-0.637px;">Title</span>
<div class="a " style="left:90px;top:459px;width:1020px;height:63px;background:#fff;border:2px solid #b9c6d6;border-radius:5px;"></div>
<span class="a t" id="t71" style="top:475.84px;font-size:28.8px;line-height:32.170px;color:#000;left:112.7px;letter-spacing:-0.345px;">Window broken</span>
<span class="a t" id="t72" style="top:567.34px;font-size:28.8px;line-height:32.170px;color:#000;left:90.8px;font-weight:700;letter-spacing:-1.886px;">Status</span>
<div class="a " style="left:1078px;top:563px;width:32px;height:32px;background:#575757;border-radius:16px;"></div>
<svg class="a" style="left:1078px;top:563px;" width="32" height="32" viewBox="0 0 32 32"><g fill="#e6e6e6"><circle cx="16" cy="9.4" r="2.3"/><path d="M12.4 13.6 H18 V21.2 H20 V23.8 H12.4 V21.2 H14.6 V16.2 H12.4Z"/></g></svg>
<div class="a " style="left:90px;top:613.5px;width:1020px;height:59px;background:#fff;border:2px solid #b9c6d6;border-radius:5px;"></div>
<span class="a t" id="t73" style="top:629.74px;font-size:28.8px;line-height:32.170px;color:#333;left:109.7px;letter-spacing:-1.077px;">In Progress</span>
<svg class="a" style="left:1055.5px;top:638px;" width="21" height="12.5" viewBox="0 0 20 12"><path d="M2.2 1 H17.8 Q20 1 18.5 2.7 L11.3 10.4 Q10 11.8 8.7 10.4 L1.5 2.7 Q0 1 2.2 1Z" fill="#000"/></svg>
<span class="a t" id="t74" style="top:717.34px;font-size:28.8px;line-height:32.170px;color:#000;left:90.8px;font-weight:700;letter-spacing:-2.195px;">Progress</span>
<span class="a t" id="t75" style="top:717.34px;font-size:28.8px;line-height:32.170px;color:#000;left:219.3px;letter-spacing:-2.542px;">0 %</span>
<div class="a " style="left:90px;top:763.5px;width:60px;height:59px;background:#fff;border:2px solid #b9c6d6;border-radius:9px;"></div>
<svg class="a" style="left:110px;top:783px;" width="20" height="20" viewBox="0 0 20 20"><path d="M2.6 2.6 L17.4 17.4 M17.4 2.6 L2.6 17.4" stroke="#000" stroke-width="4.4" stroke-linecap="round"/></svg>
<div class="a " style="left:190px;top:791.5px;width:820px;height:3px;background:#b9c6d6;"></div>
<div class="a " style="left:160.5px;top:764px;width:58px;height:58px;background:#fff;border-radius:29px;border:1.5px solid #c9d4e0;box-shadow:0 5px 7px rgba(90,110,130,.35);"></div>
<div class="a " style="left:1050px;top:763.5px;width:60px;height:59px;background:#fff;border:2px solid #b9c6d6;border-radius:9px;"></div>
<svg class="a" style="left:1066px;top:781px;" width="28" height="24" viewBox="0 0 28 24"><path d="M3 12.5 L10.2 19.8 L25 4.6" fill="none" stroke="#000" stroke-width="4.2" stroke-linecap="round" stroke-linejoin="round"/></svg>
<span class="a t" id="t76" style="top:867.34px;font-size:28.8px;line-height:32.170px;color:#000;left:90.8px;font-weight:700;letter-spacing:-0.979px;">Priority</span>
<div class="a " style="left:90px;top:913.5px;width:1020px;height:59px;background:#fff;border:2px solid #b9c6d6;border-radius:5px;"></div>
<span class="a t" id="t77" style="top:929.74px;font-size:28.8px;line-height:32.170px;color:#333;left:109.7px;letter-spacing:-0.302px;">Normal</span>
<svg class="a" style="left:1055.5px;top:938px;" width="21" height="12.5" viewBox="0 0 20 12"><path d="M2.2 1 H17.8 Q20 1 18.5 2.7 L11.3 10.4 Q10 11.8 8.7 10.4 L1.5 2.7 Q0 1 2.2 1Z" fill="#000"/></svg>
<span class="a t" id="t78" style="top:1017.54px;font-size:28.8px;line-height:32.170px;color:#000;left:90.8px;font-weight:700;letter-spacing:-1.078px;">Due date</span>
<div class="a " style="left:90px;top:1063.5px;width:60px;height:59px;background:#fff;border:2px solid #b9c6d6;border-radius:9px;"></div>
<svg class="a" style="left:106px;top:1076px;" width="28" height="32" viewBox="0 0 28 32"><path d="M6.2 1.2 Q8.4 1.2 8.4 3.4 V5 H19.6 V3.4 Q19.6 1.2 21.8 1.2 Q24 1.2 24 3.4 V5 H25 Q28 5 28 8 V11 H0 V8 Q0 5 3 5 H4 V3.4 Q4 1.2 6.2 1.2Z M0 13.4 H28 V28 Q28 31 25 31 H3 Q0 31 0 28Z" fill="#000"/><g fill="#fff"><rect x="4.6" y="16.8" width="4.6" height="4" rx="1"/><rect x="11.7" y="16.8" width="4.6" height="4" rx="1"/><rect x="18.8" y="16.8" width="4.6" height="4" rx="1"/><rect x="4.6" y="23.8" width="4.6" height="4" rx="1"/><rect x="11.7" y="23.8" width="4.6" height="4" rx="1"/><rect x="18.8" y="23.8" width="4.6" height="4" rx="1"/></g></svg>
<span class="a t" id="t79" style="top:1077.44px;font-size:28.8px;line-height:32.170px;color:#000;left:165px;letter-spacing:0.069px;">2023-09-30</span>
<svg class="a" style="left:335.5px;top:1086.5px;" width="16" height="16" viewBox="0 0 16 16"><path d="M1.5 1.5 L14.5 14.5 M14.5 1.5 L1.5 14.5" stroke="#34495e" stroke-width="2.2"/></svg>
<span class="a t" id="t80" style="top:1167.34px;font-size:28.8px;line-height:32.170px;color:#000;left:90.8px;font-weight:700;letter-spacing:-1.062px;">Room / Area Name</span>
<div class="a " style="left:90px;top:1214px;width:1020px;height:63px;background:#fff;border:2px solid #b9c6d6;border-radius:5px;"></div>
<div class="a " style="left:1200.5px;top:32px;width:705px;height:562px;background:#fff;border:2px solid #b9c6d6;border-radius:11px;overflow:hidden;"></div>
<span class="a t" id="t81" style="top:58.94px;font-size:28.8px;line-height:32.170px;color:#000;left:1232px;font-weight:700;letter-spacing:-1.769px;">Layer</span>
<div class="a " style="left:1232px;top:114px;width:642px;height:65.5px;background:#fff;border:2px solid #b9c6d6;border-radius:5px;"></div>
<span class="a t" id="t82" style="top:131.94px;font-size:28.8px;line-height:32.170px;color:#000;left:1254px;letter-spacing:-0.389px;">Ground Floor</span>
<svg class="a" style="left:1823.5px;top:142.8px;" width="21" height="12.6" viewBox="0 0 20 12"><path d="M2.2 1 H17.8 Q20 1 18.5 2.7 L11.3 10.4 Q10 11.8 8.7 10.4 L1.5 2.7 Q0 1 2.2 1Z" fill="#000"/></svg>
<div class="a " style="left:1202.5px;top:210px;width:701px;height:4px;background:#b9c6d6;"></div>
<svg class="a" style="left:1202.5px;top:214px;overflow:hidden;filter:blur(0.5px);" width="700.5" height="378" viewBox="0.5 0 700.5 378"><defs><pattern id="zz" width="12.6" height="6.2" patternUnits="userSpaceOnUse" x="47" y="178.1"><path d="M-0.6 -0.6 L6.3 6.2 L13.2 -0.6 M5.7 6.8 L6.3 6.2 L6.9 6.8" fill="none" stroke="#444" stroke-width="1"/></pattern><pattern id="hh" width="12.6" height="12" patternUnits="userSpaceOnUse" x="47" y="185.3"><path d="M-2 12 L7 0 M4.3 12 L13.3 0 M10.6 12 L19.6 0 M-8.3 12 L0.7 0" fill="none" stroke="#222" stroke-width="1.25"/><path d="M7.6 12 L12 6.1" fill="none" stroke="#555" stroke-width="0.6"/><path d="M2 6.4H7.4" stroke="#333" stroke-width="1.1"/></pattern><pattern id="xx" width="5.4" height="6" patternUnits="userSpaceOnUse" y="203"><path d="M0.8 0.8 L4.6 5.2 M4.6 0.8 L0.8 5.2" fill="none" stroke="#666" stroke-width="0.7"/></pattern></defs><rect width="701" height="378" fill="#fff"/><path d="M0 20.5H701" stroke="#222" stroke-width="1.3"/><path d="M47.7 15.4V25.6 M91.8 15.4V25.6 M104.7 15.4V25.6 M282.6 15.4V25.6 M295.4 15.4V25.6 M306.7 15.4V25.6 M395.4 15.4V25.6 M472.1 15.4V25.6 M486.3 15.4V25.6 M504.8 15.4V25.6 M549.7 15.4V25.6 M599.5 15.4V25.6 M644.4 15.4V25.6 M662.9 15.4V25.6 M677.2 15.4V25.6" stroke="#222" stroke-width="1.2"/><text x="-1" y="18.8" font-family="Liberation Sans, sans-serif" font-size="11.2" fill="#222" stroke="#222" stroke-width="0.35" text-anchor="start" textLength="15" lengthAdjust="spacingAndGlyphs">,02</text><text x="58.2" y="18.8" font-family="Liberation Sans, sans-serif" font-size="11.2" fill="#222" stroke="#222" stroke-width="0.35" text-anchor="start" textLength="23" lengthAdjust="spacingAndGlyphs">0,99</text><text x="107" y="18.8" font-family="Liberation Sans, sans-serif" font-size="11.2" fill="#222" stroke="#222" stroke-width="0.35" text-anchor="start" textLength="24" lengthAdjust="spacingAndGlyphs">0,30</text><text x="182" y="18.8" font-family="Liberation Sans, sans-serif" font-size="11.2" fill="#222" stroke="#222" stroke-width="0.35" text-anchor="start" textLength="23.6" lengthAdjust="spacingAndGlyphs">4,00</text><text x="257.5" y="18.8" font-family="Liberation Sans, sans-serif" font-size="11.2" fill="#222" stroke="#222" stroke-width="0.35" text-anchor="start" textLength="23.5" lengthAdjust="spacingAndGlyphs">0,30</text><text x="289.5" y="6" font-family="Liberation Sans, sans-serif" font-size="11.2" fill="#222" stroke="#222" stroke-width="0.35" text-anchor="start" textLength="24" lengthAdjust="spacingAndGlyphs">0,26</text><text x="339.5" y="18.8" font-family="Liberation Sans, sans-serif" font-size="11.2" fill="#222" stroke="#222" stroke-width="0.35" text-anchor="start" textLength="24" lengthAdjust="spacingAndGlyphs">2,02</text><text x="423.1" y="18.8" font-family="Liberation Sans, sans-serif" font-size="11.2" fill="#222" stroke="#222" stroke-width="0.35" text-anchor="start" textLength="24" lengthAdjust="spacingAndGlyphs">1,73</text><text x="467.8" y="6" font-family="Liberation Sans, sans-serif" font-size="11.2" fill="#222" stroke="#222" stroke-width="0.35" text-anchor="start" textLength="23.6" lengthAdjust="spacingAndGlyphs">0,30</text><text x="515.5" y="18.8" font-family="Liberation Sans, sans-serif" font-size="11.2" fill="#222" stroke="#222" stroke-width="0.35" text-anchor="start" textLength="23.6" lengthAdjust="spacingAndGlyphs">1,02</text><text x="563.3" y="18.8" font-family="Liberation Sans, sans-serif" font-size="11.2" fill="#222" stroke="#222" stroke-width="0.35" text-anchor="start" textLength="23" lengthAdjust="spacingAndGlyphs">1,11</text><text x="610.2" y="18.8" font-family="Liberation Sans, sans-serif" font-size="11.2" fill="#222" stroke="#222" stroke-width="0.35" text-anchor="start" textLength="23" lengthAdjust="spacingAndGlyphs">1,02</text><text x="642.3" y="6" font-family="Liberation Sans, sans-serif" font-size="11.2" fill="#222" stroke="#222" stroke-width="0.35" text-anchor="start" textLength="23.4" lengthAdjust="spacingAndGlyphs">0,44</text><text x="687.2" y="18.8" font-family="Liberation Sans, sans-serif" font-size="11.2" fill="#222" stroke="#222" stroke-width="0.35" text-anchor="start" textLength="23" lengthAdjust="spacingAndGlyphs">0,99</text><circle cx="98.1" cy="78.1" r="22.3" fill="#fff" stroke="#d2d2d2" stroke-width="1"/><text x="98.1" y="85.6" font-family="Liberation Sans, sans-serif" font-size="21.5" fill="#787878" stroke="#787878" stroke-width="0.35" text-anchor="middle">5</text><path d="M97.5 100.5V126 M97.5 139V156 M97.5 170V199" stroke="#555" stroke-width="0.9"/><circle cx="289.2" cy="78.1" r="22.3" fill="#fff" stroke="#d2d2d2" stroke-width="1"/><text x="289.2" y="85.6" font-family="Liberation Sans, sans-serif" font-size="21.5" fill="#787878" stroke="#787878" stroke-width="0.35" text-anchor="middle">6</text><path d="M288.59999999999997 100.5V126 M288.59999999999997 139V156 M288.59999999999997 170V199" stroke="#555" stroke-width="0.9"/><circle cx="479.4" cy="78.1" r="22.3" fill="#fff" stroke="#d2d2d2" stroke-width="1"/><text x="479.4" y="85.6" font-family="Liberation Sans, sans-serif" font-size="21.5" fill="#787878" stroke="#787878" stroke-width="0.35" text-anchor="middle">7</text><path d="M478.79999999999995 100.5V126 M478.79999999999995 139V156 M478.79999999999995 170V199" stroke="#555" stroke-width="0.9"/><circle cx="670" cy="78.1" r="22.3" fill="#fff" stroke="#d2d2d2" stroke-width="1"/><text x="670" y="85.6" font-family="Liberation Sans, sans-serif" font-size="21.5" fill="#787878" stroke="#787878" stroke-width="0.35" text-anchor="middle">8</text><path d="M669.4 100.5V126 M669.4 139V156 M669.4 170V199" stroke="#555" stroke-width="0.9"/><text x="-2" y="137.8" font-family="Liberation Sans, sans-serif" font-size="11.5" fill="#222" stroke="#222" stroke-width="0.35" text-anchor="start" textLength="12" lengthAdjust="spacingAndGlyphs">04</text><path d="M2.8 141V228" stroke="#111" stroke-width="1.1"/><text x="16.5" y="173" font-family="Liberation Sans, sans-serif" font-size="11" fill="#333" stroke="#333" stroke-width="0.35" text-anchor="start" textLength="24" lengthAdjust="spacingAndGlyphs" transform="rotate(-90 16.5 173)">1,50</text><rect x="166.6" y="133.7" width="10.6" height="21.8" fill="#fff" stroke="#111" stroke-width="1"/><text x="172" y="151" font-family="Liberation Sans, sans-serif" font-size="14" fill="#223" stroke="#223" stroke-width="0.35" text-anchor="middle">1</text><path d="M168.5 152.6H175.5" stroke="#111" stroke-width="0.8"/><path d="M172.3 155.5V214.5" stroke="#111" stroke-width="1.2"/><text x="520.6" y="138.6" font-family="Liberation Sans, sans-serif" font-size="12" fill="#222" stroke="#222" stroke-width="0.35" text-anchor="start" textLength="13.6" lengthAdjust="spacingAndGlyphs">06</text><path d="M527.4 141V228" stroke="#111" stroke-width="1.2"/><text x="523.5" y="174" font-family="Liberation Sans, sans-serif" font-size="11" fill="#333" stroke="#333" stroke-width="0.35" text-anchor="start" textLength="25" lengthAdjust="spacingAndGlyphs" transform="rotate(-90 523.5 174)">1,00</text><text x="541.2" y="174" font-family="Liberation Sans, sans-serif" font-size="11" fill="#333" stroke="#333" stroke-width="0.35" text-anchor="start" textLength="25" lengthAdjust="spacingAndGlyphs" transform="rotate(-90 541.2 174)">0,80</text><path d="M0 185.4H701 M0 187.8H701" stroke="#111" stroke-width="0.9"/><path d="M0 201.5H701" stroke="#111" stroke-width="1.3"/><path d="M0 176.9H701" stroke="#000" stroke-width="2.4"/><path d="M0 192H701" stroke="#777" stroke-width="0.9" stroke-dasharray="14 6"/><rect x="43.6" y="178" width="265.4" height="23" fill="#fff"/><rect x="46.6" y="178.1" width="260.4" height="6.2" fill="url(#zz)"/><rect x="48.6" y="185.3" width="256.9" height="12" fill="url(#hh)"/><path d="M45.2 176.9V186.6 M47.6 185V201.6" stroke="#000" stroke-width="3.2"/><path d="M307.8 176.9V186.6 M306.4 185V201.6" stroke="#000" stroke-width="2.4"/><path d="M43.6 184.7H309" stroke="#111" stroke-width="1"/><path d="M47.6 197.5H307" stroke="#111" stroke-width="0.8"/><path d="M49.6 199.2H306" stroke="#bbb" stroke-width="1.3" stroke-dasharray="11 2.5"/><path d="M46.1 201.3H308" stroke="#000" stroke-width="2.4"/><rect x="393.6" y="178" width="114.0" height="23" fill="#fff"/><rect x="396.6" y="178.1" width="109.0" height="6.2" fill="url(#zz)"/><rect x="398.6" y="185.3" width="105.5" height="12" fill="url(#hh)"/><path d="M395.20000000000005 176.9V186.6 M397.6 185V201.6" stroke="#000" stroke-width="3.2"/><path d="M506.40000000000003 176.9V186.6 M505.0 185V201.6" stroke="#000" stroke-width="2.4"/><path d="M393.6 184.7H507.6" stroke="#111" stroke-width="1"/><path d="M397.6 197.5H505.6" stroke="#111" stroke-width="0.8"/><path d="M399.6 199.2H504.6" stroke="#bbb" stroke-width="1.3" stroke-dasharray="11 2.5"/><path d="M396.1 201.3H506.6" stroke="#000" stroke-width="2.4"/><rect x="547.4" y="178" width="154.60000000000002" height="23" fill="#fff"/><rect x="550.4" y="178.1" width="151.60000000000002" height="6.2" fill="url(#zz)"/><rect x="552.4" y="185.3" width="149.60000000000002" height="12" fill="url(#hh)"/><path d="M549.0 176.9V186.6 M551.4 185V201.6" stroke="#000" stroke-width="3.2"/><path d="M547.4 184.7H702" stroke="#111" stroke-width="1"/><path d="M551.4 197.5H700" stroke="#111" stroke-width="0.8"/><path d="M553.4 199.2H699" stroke="#bbb" stroke-width="1.3" stroke-dasharray="11 2.5"/><path d="M549.9 201.3H701" stroke="#000" stroke-width="2.4"/><path d="M91.5 177V186 M105 177V186 M283 177V186 M296 177V186 M472.5 177V186 M486 177V186 M663 177V186 M677 177V186" stroke="#333" stroke-width="0.9"/><path d="M91.8 200V378" stroke="#111" stroke-width="1.1" stroke-dasharray="16 3 3 3"/><path d="M97.7 200V378" stroke="#111" stroke-width="1.1" stroke-dasharray="18 4"/><path d="M101.4 200V364" stroke="#000" stroke-width="3"/><path d="M104.9 200V378" stroke="#111" stroke-width="1"/><path d="M283.5 200V378" stroke="#111" stroke-width="1"/><path d="M287.2 200V364" stroke="#000" stroke-width="4"/><path d="M295 200V378" stroke="#111" stroke-width="1"/><path d="M473 200V378" stroke="#111" stroke-width="1.2"/><path d="M476.4 200V364" stroke="#555" stroke-width="1.4" stroke-dasharray="2 2"/><path d="M480.4 200V364" stroke="#000" stroke-width="4.6"/><path d="M486.6 210V378" stroke="#111" stroke-width="1.1" stroke-dasharray="17 4"/><path d="M572.9 200V378" stroke="#000" stroke-width="2"/><path d="M576.6 200V378" stroke="#111" stroke-width="1"/><path d="M663.5 200V378" stroke="#111" stroke-width="1.1" stroke-dasharray="17 4"/><path d="M670.2 200V364" stroke="#000" stroke-width="6"/><path d="M676.4 200V378" stroke="#111" stroke-width="1"/><rect x="483" y="203" width="89" height="6" fill="url(#xx)"/><path d="M483 210.4H572" stroke="#000" stroke-width="2.4"/><path d="M135.5 240V222.8H251.8V262" fill="none" stroke="#333" stroke-width="1.2" stroke-dasharray="13 7"/><path d="M105.2 202 L243.4 238.5 L253.2 274 L275.5 361.5" fill="none" stroke="#999" stroke-width="0.8" stroke-dasharray="12 3 2 3"/><path d="M166.7 262V245.6H220.8V358" fill="none" stroke="#333" stroke-width="1"/><text x="170.8" y="252.7" font-family="Liberation Sans, sans-serif" font-size="15.5" fill="#1a1a2a" stroke="#1a1a2a" stroke-width="0.35" text-anchor="start" textLength="45.5" lengthAdjust="spacingAndGlyphs">Stiege</text><text x="170.8" y="271.4" font-family="Liberation Sans, sans-serif" font-size="13" fill="#1a1a2a" stroke="#1a1a2a" stroke-width="0.35" text-anchor="start" textLength="47.5" lengthAdjust="spacingAndGlyphs">15,72 m²</text><text x="190" y="210.5" font-family="Liberation Sans, sans-serif" font-size="6" fill="#888" stroke="#888" stroke-width="0" text-anchor="start">R</text><path d="M105 263.8H166.7" stroke="#444" stroke-width="1" stroke-dasharray="13 11"/><path d="M220.8 263.8H283.5" stroke="#444" stroke-width="1" stroke-dasharray="13 11"/><path d="M105 275.5H166.7" stroke="#444" stroke-width="1" stroke-dasharray="13 11"/><path d="M220.8 275.5H283.5" stroke="#444" stroke-width="1" stroke-dasharray="13 11"/><path d="M105 286.6H166.7" stroke="#444" stroke-width="1" stroke-dasharray="13 11"/><path d="M220.8 286.6H283.5" stroke="#444" stroke-width="1" stroke-dasharray="13 11"/><path d="M105 298.2H166.7" stroke="#444" stroke-width="1" stroke-dasharray="13 11"/><path d="M220.8 298.2H283.5" stroke="#444" stroke-width="1" stroke-dasharray="13 11"/><path d="M105 308.9H166.7" stroke="#444" stroke-width="1" stroke-dasharray="13 11"/><path d="M220.8 308.9H283.5" stroke="#444" stroke-width="1" stroke-dasharray="13 11"/><path d="M105 320.5H166.7" stroke="#777" stroke-width="1"/><path d="M220.8 320.5H283.5" stroke="#444" stroke-width="1" stroke-dasharray="13 11"/><path d="M105 331.5H166.7" stroke="#777" stroke-width="1"/><path d="M220.8 331.5H283.5" stroke="#444" stroke-width="1" stroke-dasharray="13 11"/><path d="M105 341.9H166.7" stroke="#777" stroke-width="1"/><path d="M220.8 341.9H283.5" stroke="#444" stroke-width="1" stroke-dasharray="13 11"/><path d="M105 353.1H166.7" stroke="#777" stroke-width="1"/><path d="M220.8 353.1H283.5" stroke="#444" stroke-width="1" stroke-dasharray="13 11"/><path d="M105 363.3H166.7" stroke="#777" stroke-width="1"/><path d="M220.8 363.3H283.5" stroke="#444" stroke-width="1" stroke-dasharray="13 11"/><path d="M166.7 262V378 M135.5 252V378" stroke="#555" stroke-width="0.9" stroke-dasharray="9 14"/><path d="M135.5 320V378 M166.7 330V378" stroke="#666" stroke-width="0.9"/><path d="M251.8 262V378" stroke="#555" stroke-width="0.9" stroke-dasharray="9 14"/><path d="M105 306 L166.7 327 M105 310 L166.7 331" stroke="#999" stroke-width="0.7"/><path d="M128 329 L135.5 321 L145 329" fill="none" stroke="#aaa" stroke-width="0.7"/><text x="109" y="271.8" font-family="Liberation Sans, sans-serif" font-size="5.5" fill="#889" stroke="#889" stroke-width="0" text-anchor="start">10</text><text x="270" y="271.8" font-family="Liberation Sans, sans-serif" font-size="5.5" fill="#889" stroke="#889" stroke-width="0" text-anchor="start">12</text><text x="109" y="283.5" font-family="Liberation Sans, sans-serif" font-size="5.5" fill="#889" stroke="#889" stroke-width="0" text-anchor="start">9</text><text x="270" y="283.5" font-family="Liberation Sans, sans-serif" font-size="5.5" fill="#889" stroke="#889" stroke-width="0" text-anchor="start">13</text><text x="109" y="294.6" font-family="Liberation Sans, sans-serif" font-size="5.5" fill="#889" stroke="#889" stroke-width="0" text-anchor="start">8</text><text x="270" y="294.6" font-family="Liberation Sans, sans-serif" font-size="5.5" fill="#889" stroke="#889" stroke-width="0" text-anchor="start">14</text><text x="109" y="306.2" font-family="Liberation Sans, sans-serif" font-size="5.5" fill="#889" stroke="#889" stroke-width="0" text-anchor="start">7</text><text x="270" y="306.2" font-family="Liberation Sans, sans-serif" font-size="5.5" fill="#889" stroke="#889" stroke-width="0" text-anchor="start">15</text><text x="109" y="316.9" font-family="Liberation Sans, sans-serif" font-size="5.5" fill="#889" stroke="#889" stroke-width="0" text-anchor="start">6</text><text x="270" y="316.9" font-family="Liberation Sans, sans-serif" font-size="5.5" fill="#889" stroke="#889" stroke-width="0" text-anchor="start">16</text><text x="109" y="328.5" font-family="Liberation Sans, sans-serif" font-size="5.5" fill="#889" stroke="#889" stroke-width="0" text-anchor="start">5</text><text x="270" y="328.5" font-family="Liberation Sans, sans-serif" font-size="5.5" fill="#889" stroke="#889" stroke-width="0" text-anchor="start">17</text><text x="109" y="339.5" font-family="Liberation Sans, sans-serif" font-size="5.5" fill="#889" stroke="#889" stroke-width="0" text-anchor="start">4</text><text x="270" y="339.5" font-family="Liberation Sans, sans-serif" font-size="5.5" fill="#889" stroke="#889" stroke-width="0" text-anchor="start">18</text><text x="109" y="349.9" font-family="Liberation Sans, sans-serif" font-size="5.5" fill="#889" stroke="#889" stroke-width="0" text-anchor="start">3</text><text x="270" y="349.9" font-family="Liberation Sans, sans-serif" font-size="5.5" fill="#889" stroke="#889" stroke-width="0" text-anchor="start">19</text><text x="109" y="361.1" font-family="Liberation Sans, sans-serif" font-size="5.5" fill="#889" stroke="#889" stroke-width="0" text-anchor="start">2</text><text x="270" y="361.1" font-family="Liberation Sans, sans-serif" font-size="5.5" fill="#889" stroke="#889" stroke-width="0" text-anchor="start">20</text><text x="109" y="371.3" font-family="Liberation Sans, sans-serif" font-size="5.5" fill="#889" stroke="#889" stroke-width="0" text-anchor="start">1</text><text x="270" y="371.3" font-family="Liberation Sans, sans-serif" font-size="5.5" fill="#889" stroke="#889" stroke-width="0" text-anchor="start">21</text><path d="M131.5 330V366" stroke="#99a" stroke-width="3.5" stroke-dasharray="1.2 2.4" opacity=".6"/><path d="M57 230.2H115" stroke="#111" stroke-width="1"/><rect x="34.8" y="225.6" width="22" height="10.4" fill="#fff" stroke="#111" stroke-width="1.1"/><ellipse cx="42.0" cy="230.9" rx="3.2" ry="2.9" fill="none" stroke="#223" stroke-width="1"/><ellipse cx="49.199999999999996" cy="230.9" rx="3.4" ry="3.1" fill="none" stroke="#223" stroke-width="1"/><path d="M41 327V378" stroke="#111" stroke-width="1"/><rect x="34.8" y="306.2" width="10.8" height="21.4" fill="#fff" stroke="#111" stroke-width="1.1"/><ellipse cx="40.199999999999996" cy="312.8" rx="2.9" ry="3.2" fill="none" stroke="#223" stroke-width="1"/><ellipse cx="40.199999999999996" cy="319.8" rx="3.1" ry="3.5" fill="none" stroke="#223" stroke-width="1"/><path d="M271 281H331" stroke="#111" stroke-width="1"/><rect x="330.2" y="275.6" width="22" height="10.4" fill="#fff" stroke="#111" stroke-width="1.1"/><ellipse cx="337.4" cy="280.90000000000003" rx="3.2" ry="2.9" fill="none" stroke="#223" stroke-width="1"/><ellipse cx="344.59999999999997" cy="280.90000000000003" rx="3.4" ry="3.1" fill="none" stroke="#223" stroke-width="1"/><path d="M324.9 327V378" stroke="#111" stroke-width="1"/><rect x="319.3" y="306.2" width="10.8" height="21.4" fill="#fff" stroke="#111" stroke-width="1.1"/><ellipse cx="324.7" cy="312.8" rx="2.9" ry="3.2" fill="none" stroke="#223" stroke-width="1"/><ellipse cx="324.7" cy="319.8" rx="3.1" ry="3.5" fill="none" stroke="#223" stroke-width="1"/><path d="M467.7 281H526" stroke="#111" stroke-width="1"/><rect x="525.6" y="275.6" width="22" height="10.4" fill="#fff" stroke="#111" stroke-width="1.1"/><ellipse cx="532.8000000000001" cy="280.90000000000003" rx="3.2" ry="2.9" fill="none" stroke="#223" stroke-width="1"/><ellipse cx="540.0" cy="280.90000000000003" rx="3.4" ry="3.1" fill="none" stroke="#223" stroke-width="1"/><path d="M623.7 281H682" stroke="#111" stroke-width="1"/><rect x="602" y="275.6" width="22" height="10.4" fill="#fff" stroke="#111" stroke-width="1.1"/><ellipse cx="609.2" cy="280.90000000000003" rx="3.2" ry="2.9" fill="none" stroke="#223" stroke-width="1"/><ellipse cx="616.4" cy="280.90000000000003" rx="3.4" ry="3.1" fill="none" stroke="#223" stroke-width="1"/><path d="M587.4 327V378" stroke="#111" stroke-width="1"/><rect x="582" y="306.2" width="10.8" height="21.4" fill="#fff" stroke="#111" stroke-width="1.1"/><ellipse cx="587.4" cy="312.8" rx="2.9" ry="3.2" fill="none" stroke="#223" stroke-width="1"/><ellipse cx="587.4" cy="319.8" rx="3.1" ry="3.5" fill="none" stroke="#223" stroke-width="1"/><path d="M289 202.5 L473 369.5 M473 207.3 L294.2 370.4" stroke="#777" stroke-width="0.8"/><path d="M351.5 186V227" stroke="#111" stroke-width="1.1"/><path d="M361.6 207.3H404" stroke="#111" stroke-width="1.2"/><path d="M362 208.3 Q364 245.3 403 248.8" fill="none" stroke="#777" stroke-width="0.8"/><path d="M361.6 265.2H404" stroke="#111" stroke-width="1.2"/><path d="M362 266.2 Q364 303.2 403 306.7" fill="none" stroke="#777" stroke-width="0.8"/><path d="M361.6 323.2H404" stroke="#111" stroke-width="1.2"/><path d="M362 324.2 Q364 361.2 403 364.7" fill="none" stroke="#777" stroke-width="0.8"/><path d="M403.6 201V207.6 M406.4 201V207.6" stroke="#111" stroke-width="1"/><path d="M406 257.2H473" stroke="#000" stroke-width="3.8"/><rect x="403.4" y="248.2" width="3" height="17.4" fill="#fff" stroke="#111" stroke-width="1"/><path d="M406 314.8H473" stroke="#000" stroke-width="3.8"/><rect x="403.4" y="305.8" width="3" height="17.4" fill="#fff" stroke="#111" stroke-width="1"/><path d="M403.4 362V372 M406.4 362V372" stroke="#111" stroke-width="1"/><text x="416" y="223.3" font-family="Liberation Sans, sans-serif" font-size="13" fill="#222" stroke="#222" stroke-width="0.35" text-anchor="start" textLength="22.6" lengthAdjust="spacingAndGlyphs">1,00</text><path d="M375.9 227.2H454.3" stroke="#111" stroke-width="1.1"/><text x="416" y="240.2" font-family="Liberation Sans, sans-serif" font-size="13" fill="#222" stroke="#222" stroke-width="0.35" text-anchor="start" textLength="22.6" lengthAdjust="spacingAndGlyphs">2,10</text><text x="416" y="281.3" font-family="Liberation Sans, sans-serif" font-size="13" fill="#222" stroke="#222" stroke-width="0.35" text-anchor="start" textLength="22.6" lengthAdjust="spacingAndGlyphs">1,00</text><path d="M375.9 285.4H454.3" stroke="#111" stroke-width="1.1"/><text x="416" y="298.2" font-family="Liberation Sans, sans-serif" font-size="13" fill="#222" stroke="#222" stroke-width="0.35" text-anchor="start" textLength="22.6" lengthAdjust="spacingAndGlyphs">2,10</text><text x="416" y="339.2" font-family="Liberation Sans, sans-serif" font-size="13" fill="#222" stroke="#222" stroke-width="0.35" text-anchor="start" textLength="22.6" lengthAdjust="spacingAndGlyphs">1,00</text><path d="M375.9 343.1H454.3" stroke="#111" stroke-width="1.1"/><text x="416" y="356.1" font-family="Liberation Sans, sans-serif" font-size="13" fill="#222" stroke="#222" stroke-width="0.35" text-anchor="start" textLength="22.6" lengthAdjust="spacingAndGlyphs">2,10</text><text x="338" y="252.9" font-family="Liberation Sans, sans-serif" font-size="15.5" fill="#1a1a2a" stroke="#1a1a2a" stroke-width="0.35" text-anchor="start" textLength="24.5" lengthAdjust="spacingAndGlyphs">WC</text><text x="338" y="271.8" font-family="Liberation Sans, sans-serif" font-size="13" fill="#1a1a2a" stroke="#1a1a2a" stroke-width="0.35" text-anchor="start" textLength="47" lengthAdjust="spacingAndGlyphs">16,17 m²</text><text x="349" y="327.6" font-family="Liberation Sans, sans-serif" font-size="12" fill="#222" stroke="#222" stroke-width="0.35" text-anchor="start" textLength="13" lengthAdjust="spacingAndGlyphs">04</text><path d="M351.5 330V378" stroke="#111" stroke-width="1.1"/><text x="345.5" y="361" font-family="Liberation Sans, sans-serif" font-size="11.5" fill="#333" stroke="#333" stroke-width="0.35" text-anchor="start" textLength="24" lengthAdjust="spacingAndGlyphs" transform="rotate(-90 345.5 361)">1,00</text><text x="363.5" y="361" font-family="Liberation Sans, sans-serif" font-size="11.5" fill="#333" stroke="#333" stroke-width="0.35" text-anchor="start" textLength="24" lengthAdjust="spacingAndGlyphs" transform="rotate(-90 363.5 361)">2,10</text><path d="M487.3 210.8 L572.9 370.4 M568.4 210.8 L487.3 370.4" stroke="#777" stroke-width="0.8"/><text x="502.5" y="252.7" font-family="Liberation Sans, sans-serif" font-size="15.5" fill="#1a1a2a" stroke="#1a1a2a" stroke-width="0.35" text-anchor="start" textLength="24" lengthAdjust="spacingAndGlyphs">WC</text><text x="502.5" y="271.4" font-family="Liberation Sans, sans-serif" font-size="13" fill="#1a1a2a" stroke="#1a1a2a" stroke-width="0.35" text-anchor="start" textLength="40" lengthAdjust="spacingAndGlyphs">7,90 m²</text><circle cx="527" cy="334" r="33" fill="none" stroke="#999" stroke-width="0.9" stroke-dasharray="9 12"/><path d="M532 330 L549 311 L552 314" fill="none" stroke="#aaa" stroke-width="0.7"/><text x="503" y="352" font-family="Liberation Sans, sans-serif" font-size="7" fill="#aaa" stroke="#aaa" stroke-width="0" text-anchor="start" transform="rotate(-50 503 352)">1,50m</text><text x="516.4" y="328" font-family="Liberation Sans, sans-serif" font-size="12" fill="#222" stroke="#222" stroke-width="0.35" text-anchor="start" textLength="21.6" lengthAdjust="spacingAndGlyphs">05A</text><path d="M527.4 330.3V378" stroke="#111" stroke-width="1"/><text x="523.5" y="362" font-family="Liberation Sans, sans-serif" font-size="11.5" fill="#333" stroke="#333" stroke-width="0.35" text-anchor="start" textLength="24" lengthAdjust="spacingAndGlyphs" transform="rotate(-90 523.5 362)">1,00</text><text x="541" y="362" font-family="Liberation Sans, sans-serif" font-size="11.5" fill="#333" stroke="#333" stroke-width="0.35" text-anchor="start" textLength="24" lengthAdjust="spacingAndGlyphs" transform="rotate(-90 541 362)">2,10</text><text x="577.4" y="248.6" font-family="Liberation Sans, sans-serif" font-size="15.5" fill="#1a1a2a" stroke="#1a1a2a" stroke-width="0.35" text-anchor="start" textLength="90" lengthAdjust="spacingAndGlyphs">Technikraum</text><text x="626" y="267.3" font-family="Liberation Sans, sans-serif" font-size="13" fill="#1a1a2a" stroke="#1a1a2a" stroke-width="0.35" text-anchor="start" textLength="40.5" lengthAdjust="spacingAndGlyphs">7,48 m²</text><text x="622.3" y="328" font-family="Liberation Sans, sans-serif" font-size="12" fill="#222" stroke="#222" stroke-width="0.35" text-anchor="start" textLength="20.8" lengthAdjust="spacingAndGlyphs">05B</text><path d="M631.7 330.3V378" stroke="#111" stroke-width="1"/><text x="628" y="362" font-family="Liberation Sans, sans-serif" font-size="11.5" fill="#333" stroke="#333" stroke-width="0.35" text-anchor="start" textLength="24" lengthAdjust="spacingAndGlyphs" transform="rotate(-90 628 362)">1,00</text><text x="646" y="362" font-family="Liberation Sans, sans-serif" font-size="11.5" fill="#333" stroke="#333" stroke-width="0.35" text-anchor="start" textLength="24" lengthAdjust="spacingAndGlyphs" transform="rotate(-90 646 362)">2,10</text><path d="M676.4 257.2H701 M676.4 314.8H701" stroke="#000" stroke-width="3.6"/><path d="M677 203 L701 225 M701 345 L678 368" stroke="#777" stroke-width="0.8"/><text x="700" y="232" font-family="Liberation Sans, sans-serif" font-size="11.5" fill="#333" stroke="#333" stroke-width="0.35" text-anchor="start" textLength="12" lengthAdjust="spacingAndGlyphs" transform="rotate(-90 700 232)">04</text><text x="700" y="290" font-family="Liberation Sans, sans-serif" font-size="11.5" fill="#333" stroke="#333" stroke-width="0.35" text-anchor="start" textLength="12" lengthAdjust="spacingAndGlyphs" transform="rotate(-90 700 290)">04</text><text x="700" y="349" font-family="Liberation Sans, sans-serif" font-size="11.5" fill="#333" stroke="#333" stroke-width="0.35" text-anchor="start" textLength="12" lengthAdjust="spacingAndGlyphs" transform="rotate(-90 700 349)">04</text><path d="M669.2 215V250 M669.2 268V305 M669.2 322V356" stroke="#999" stroke-width="0.9"/><path d="M0 363.3H701" stroke="#111" stroke-width="1.4" stroke-dasharray="17 5"/><path d="M0 368.4H701" stroke="#111" stroke-width="1.2" stroke-dasharray="14 6" stroke-dashoffset="6"/><path d="M0 377H701" stroke="#111" stroke-width="1.2" stroke-dasharray="17 5"/><path d="M0 372.6H92 M371.4 372.6H502.5 M551.5 372.6H607.7 M657.6 372.6H701" stroke="#000" stroke-width="3"/><path d="M295 372.6H350" stroke="#000" stroke-width="3"/></svg>
<svg class="a" style="left:1525px;top:316px;" width="90" height="90" viewBox="0 0 90 90"><defs><radialGradient id="msh" cx="50%" cy="50%" r="50%"><stop offset="0" stop-color="#000" stop-opacity=".13"/><stop offset=".75" stop-color="#000" stop-opacity=".10"/><stop offset="1" stop-color="#000" stop-opacity="0"/></radialGradient></defs><ellipse cx="54" cy="65.5" rx="25" ry="10.5" transform="rotate(-31 54 65.5)" fill="url(#msh)"/><path d="M28.4 85.7 L5.1 40.85 A26.05 26.05 0 1 1 51.2 40.85 Z" fill="#0095ff"/><path d="M28.4 85.7 L5.1 40.85 A26.05 26.05 0 0 1 28.4 2.85 Z" fill="#0080e0"/><circle cx="28.2" cy="28.9" r="17" fill="#fff"/><path d="M28.4 11.9 A17 17 0 0 0 28.4 45.9Z" fill="#e6e6e6"/><circle cx="28.2" cy="28.9" r="10.9" fill="#3a50c0"/></svg>
<div class="a " style="left:1200.5px;top:625px;width:705px;height:700px;background:#fff;border:2px solid #b9c6d6;border-radius:11px;"></div>
<span class="a t" id="t83" style="top:660.94px;font-size:28.8px;line-height:32.170px;color:#000;left:1232px;font-weight:700;letter-spacing:-1.307px;">Attachments (2)</span>
<svg class="a" style="left:1689.5px;top:663.5px;" width="30" height="25" viewBox="0 0 30 25"><g fill="#575757"><circle cx="2.9" cy="3" r="2.9"/><circle cx="2.9" cy="12.5" r="2.9"/><circle cx="2.9" cy="22" r="2.9"/><rect x="9" y="1.2" width="20.6" height="3.6" rx="1.8"/><rect x="9" y="10.7" width="20.6" height="3.6" rx="1.8"/><rect x="9" y="20.2" width="20.6" height="3.6" rx="1.8"/></g></svg>
<div class="a " style="left:1744px;top:646px;width:60px;height:60px;background:#ebf0f5;border-radius:7px;"></div>
<svg class="a" style="left:1759px;top:663px;" width="30" height="26" viewBox="0 0 30 26"><rect x="0" y="0" width="30" height="26" rx="4" fill="#000"/><g fill="#ebf0f5"><rect x="3.6" y="3.6" width="5.6" height="4.2"/><rect x="12.2" y="3.6" width="5.6" height="4.2"/><rect x="20.8" y="3.6" width="5.6" height="4.2"/><rect x="3.6" y="10.9" width="5.6" height="4.2"/><rect x="12.2" y="10.9" width="5.6" height="4.2"/><rect x="20.8" y="10.9" width="5.6" height="4.2"/><rect x="3.6" y="18.2" width="5.6" height="4.2"/><rect x="12.2" y="18.2" width="5.6" height="4.2"/><rect x="20.8" y="18.2" width="5.6" height="4.2"/></g></svg>
<svg class="a" style="left:1827.5px;top:661.5px;" width="31" height="29" viewBox="0 0 31 29"><path d="M2.4 0.4 H28.4 Q31.6 0.8 29.6 3.6 L19.2 15.4 V26 Q19 29.2 16.4 27.4 L12.6 24.4 Q11.6 23.6 11.6 22.2 V15.4 L1.2 3.6 Q-0.8 0.8 2.4 0.4Z" fill="#000"/></svg>
<div class="a " style="left:1850px;top:650px;width:20px;height:20px;background:#ffdc00;border-radius:10px;"></div>
<div class="a " style="left:1232px;top:716.5px;width:642px;height:59px;background:#ebf0f5;border:2px solid #b9c6d6;border-radius:9px;"></div>
<svg class="a" style="left:1265px;top:733px;" width="26" height="26" viewBox="0 0 26 26"><path d="M13 1.8V24.2M1.8 13H24.2" stroke="#000" stroke-width="3.6" stroke-linecap="round"/></svg>
<span class="a t" id="t84" style="top:730.94px;font-size:28.8px;line-height:32.170px;color:#000;left:1307px;letter-spacing:-0.530px;">Add new attachment</span>
<div class="a " style="left:1232px;top:804.5px;width:310px;height:239px;background:#ebf0f5;border:2px solid #b9c6d6;border-radius:9px;overflow:hidden;"><svg class="a" style="left:69px;top:0px" width="169" height="236" viewBox="0 0 169 236"><rect width="169" height="240" fill="#fff"/><path d="M77.0 7.5H97.0" stroke="#333" stroke-width="1.5" stroke-dasharray="5 1 3 1 7 1 4 1 6 1"/><path d="M77.5 10.5H96.0" stroke="#333" stroke-width="1.5" stroke-dasharray="5 1 3 1 7 1 4 1 6 1"/><path d="M82.0 13.9H92.0" stroke="#888" stroke-width="1" stroke-dasharray="5 1 3 1 7 1 4 1 6 1"/><path d="M10.3 19.8H42.0" stroke="#444" stroke-width="1.3" stroke-dasharray="5 1 3 1 7 1 4 1 6 1"/><path d="M10.3 22.4H41.0" stroke="#444" stroke-width="1.3" stroke-dasharray="5 1 3 1 7 1 4 1 6 1"/><g opacity="1"><rect x="9.9" y="26.4" width="153.6" height="6.9" fill="#fff" stroke="#444" stroke-width="1.1"/><path d="M16.7 26.4V33.3 M29.6 26.4V33.3 M102.6 26.4V33.3 M116.5 26.4V33.3 M124 26.4V33.3 M139.7 26.4V33.3" stroke="#555" stroke-width="0.9"/><path d="M11.0 29.8H15.5" stroke="#333" stroke-width="1.3" stroke-dasharray="none"/><path d="M19.0 29.8H27.0" stroke="#333" stroke-width="1.3" stroke-dasharray="none"/><path d="M60.0 29.8H72.0" stroke="#333" stroke-width="1.3" stroke-dasharray="none"/><path d="M105.0 29.8H114.0" stroke="#333" stroke-width="1.3" stroke-dasharray="none"/><path d="M118.0 29.8H122.5" stroke="#333" stroke-width="1.3" stroke-dasharray="none"/><path d="M128.0 29.8H136.0" stroke="#333" stroke-width="1.3" stroke-dasharray="none"/><path d="M145.0 29.8H158.0" stroke="#333" stroke-width="1.3" stroke-dasharray="none"/></g><path d="M20.0 36.6H26.0" stroke="#333" stroke-width="1.3" stroke-dasharray="none"/><path d="M30.0 36.6H46.0" stroke="#333" stroke-width="1.3" stroke-dasharray="none"/><g opacity="1"><rect x="9.9" y="39.9" width="153.6" height="12.3" fill="#fff" stroke="#444" stroke-width="1.1"/><path d="M16.7 39.9V52.2 M29.6 39.9V52.2 M102.6 39.9V52.2 M116.5 39.9V52.2 M124 39.9V52.2 M139.7 39.9V52.2" stroke="#555" stroke-width="0.9"/><path d="M30.6 43.3H101.5" stroke="#777" stroke-width="1.0" stroke-dasharray="5 1 3 1 7 1 4 1 6 1"/><path d="M30.6 46.0H101.5" stroke="#777" stroke-width="1.0" stroke-dasharray="5 1 3 1 7 1 4 1 6 1"/><path d="M30.6 48.8H88.0" stroke="#777" stroke-width="1.0" stroke-dasharray="5 1 3 1 7 1 4 1 6 1"/><path d="M19.0 46.0H27.0" stroke="#777" stroke-width="1.1" stroke-dasharray="none"/><path d="M106.0 46.0H113.0" stroke="#666" stroke-width="1.1" stroke-dasharray="none"/><path d="M118.5 46.0H122.0" stroke="#999" stroke-width="1" stroke-dasharray="none"/><path d="M12.6 46.0H14.0" stroke="#888" stroke-width="1" stroke-dasharray="none"/></g><g opacity="1"><rect x="9.9" y="54.8" width="153.6" height="11.3" fill="#fff" stroke="#444" stroke-width="1.1"/><path d="M16.7 54.8V66.1 M29.6 54.8V66.1 M102.6 54.8V66.1 M116.5 54.8V66.1 M124 54.8V66.1 M139.7 54.8V66.1" stroke="#555" stroke-width="0.9"/><path d="M30.6 57.7H101.5" stroke="#777" stroke-width="1.0" stroke-dasharray="5 1 3 1 7 1 4 1 6 1"/><path d="M30.6 60.4H101.5" stroke="#777" stroke-width="1.0" stroke-dasharray="5 1 3 1 7 1 4 1 6 1"/><path d="M30.6 63.1H88.0" stroke="#777" stroke-width="1.0" stroke-dasharray="5 1 3 1 7 1 4 1 6 1"/><path d="M19.0 60.4H27.0" stroke="#777" stroke-width="1.1" stroke-dasharray="none"/><path d="M106.0 60.4H113.0" stroke="#666" stroke-width="1.1" stroke-dasharray="none"/><path d="M118.5 60.4H122.0" stroke="#999" stroke-width="1" stroke-dasharray="none"/><path d="M12.6 60.4H14.0" stroke="#888" stroke-width="1" stroke-dasharray="none"/></g><g opacity="1"><rect x="9.9" y="68.8" width="153.6" height="7.8" fill="#fff" stroke="#444" stroke-width="1.1"/><path d="M16.7 68.8V76.6 M29.6 68.8V76.6 M102.6 68.8V76.6 M116.5 68.8V76.6 M124 68.8V76.6 M139.7 68.8V76.6" stroke="#555" stroke-width="0.9"/><path d="M30.6 71.3H101.5" stroke="#777" stroke-width="1.0" stroke-dasharray="5 1 3 1 7 1 4 1 6 1"/><path d="M30.6 74.0H75.0" stroke="#777" stroke-width="1.0" stroke-dasharray="5 1 3 1 7 1 4 1 6 1"/><path d="M19.0 72.7H27.0" stroke="#777" stroke-width="1.1" stroke-dasharray="none"/><path d="M106.0 72.7H113.0" stroke="#666" stroke-width="1.1" stroke-dasharray="none"/><path d="M118.5 72.7H122.0" stroke="#999" stroke-width="1" stroke-dasharray="none"/><path d="M12.6 72.7H14.0" stroke="#888" stroke-width="1" stroke-dasharray="none"/></g><g opacity="1"><rect x="9.9" y="79.2" width="153.6" height="7.9" fill="#fff" stroke="#444" stroke-width="1.1"/><path d="M16.7 79.2V87.1 M29.6 79.2V87.1 M102.6 79.2V87.1 M116.5 79.2V87.1 M124 79.2V87.1 M139.7 79.2V87.1" stroke="#555" stroke-width="0.9"/><path d="M30.6 81.8H101.5" stroke="#777" stroke-width="1.0" stroke-dasharray="5 1 3 1 7 1 4 1 6 1"/><path d="M30.6 84.5H75.0" stroke="#777" stroke-width="1.0" stroke-dasharray="5 1 3 1 7 1 4 1 6 1"/><path d="M19.0 83.2H27.0" stroke="#777" stroke-width="1.1" stroke-dasharray="none"/><path d="M106.0 83.2H113.0" stroke="#666" stroke-width="1.1" stroke-dasharray="none"/><path d="M118.5 83.2H122.0" stroke="#999" stroke-width="1" stroke-dasharray="none"/><path d="M12.6 83.2H14.0" stroke="#888" stroke-width="1" stroke-dasharray="none"/></g><path d="M20.0 90.4H26.0" stroke="#333" stroke-width="1.3" stroke-dasharray="none"/><path d="M30.0 90.4H65.0" stroke="#333" stroke-width="1.3" stroke-dasharray="none"/><g opacity="1"><rect x="9.9" y="94.4" width="153.6" height="11.4" fill="#fff" stroke="#444" stroke-width="1.1"/><path d="M16.7 94.4V105.8 M29.6 94.4V105.8 M102.6 94.4V105.8 M116.5 94.4V105.8 M124 94.4V105.8 M139.7 94.4V105.8" stroke="#555" stroke-width="0.9"/><path d="M30.6 97.4H101.5" stroke="#777" stroke-width="1.0" stroke-dasharray="5 1 3 1 7 1 4 1 6 1"/><path d="M30.6 100.1H101.5" stroke="#777" stroke-width="1.0" stroke-dasharray="5 1 3 1 7 1 4 1 6 1"/><path d="M30.6 102.8H88.0" stroke="#777" stroke-width="1.0" stroke-dasharray="5 1 3 1 7 1 4 1 6 1"/><path d="M19.0 100.1H27.0" stroke="#777" stroke-width="1.1" stroke-dasharray="none"/><path d="M106.0 100.1H113.0" stroke="#666" stroke-width="1.1" stroke-dasharray="none"/><path d="M118.5 100.1H122.0" stroke="#999" stroke-width="1" stroke-dasharray="none"/><path d="M12.6 100.1H14.0" stroke="#888" stroke-width="1" stroke-dasharray="none"/></g><g opacity="1"><rect x="9.9" y="108.5" width="153.6" height="11.5" fill="#fff" stroke="#444" stroke-width="1.1"/><path d="M16.7 108.5V120 M29.6 108.5V120 M102.6 108.5V120 M116.5 108.5V120 M124 108.5V120 M139.7 108.5V120" stroke="#555" stroke-width="0.9"/><path d="M30.6 111.5H101.5" stroke="#777" stroke-width="1.0" stroke-dasharray="5 1 3 1 7 1 4 1 6 1"/><path d="M30.6 114.2H101.5" stroke="#777" stroke-width="1.0" stroke-dasharray="5 1 3 1 7 1 4 1 6 1"/><path d="M30.6 117.0H88.0" stroke="#777" stroke-width="1.0" stroke-dasharray="5 1 3 1 7 1 4 1 6 1"/><path d="M19.0 114.2H27.0" stroke="#777" stroke-width="1.1" stroke-dasharray="none"/><path d="M106.0 114.2H113.0" stroke="#666" stroke-width="1.1" stroke-dasharray="none"/><path d="M118.5 114.2H122.0" stroke="#999" stroke-width="1" stroke-dasharray="none"/><path d="M12.6 114.2H14.0" stroke="#888" stroke-width="1" stroke-dasharray="none"/></g><path d="M20.0 123.2H26.0" stroke="#333" stroke-width="1.3" stroke-dasharray="none"/><path d="M30.0 123.2H65.0" stroke="#333" stroke-width="1.3" stroke-dasharray="none"/><g opacity="1"><rect x="9.9" y="126.2" width="153.6" height="11.3" fill="#fff" stroke="#444" stroke-width="1.1"/><path d="M16.7 126.2V137.5 M29.6 126.2V137.5 M102.6 126.2V137.5 M116.5 126.2V137.5 M124 126.2V137.5 M139.7 126.2V137.5" stroke="#555" stroke-width="0.9"/><path d="M30.6 129.2H101.5" stroke="#777" stroke-width="1.0" stroke-dasharray="5 1 3 1 7 1 4 1 6 1"/><path d="M30.6 131.8H101.5" stroke="#777" stroke-width="1.0" stroke-dasharray="5 1 3 1 7 1 4 1 6 1"/><path d="M30.6 134.5H88.0" stroke="#777" stroke-width="1.0" stroke-dasharray="5 1 3 1 7 1 4 1 6 1"/><path d="M19.0 131.8H27.0" stroke="#777" stroke-width="1.1" stroke-dasharray="none"/><path d="M106.0 131.8H113.0" stroke="#666" stroke-width="1.1" stroke-dasharray="none"/><path d="M118.5 131.8H122.0" stroke="#999" stroke-width="1" stroke-dasharray="none"/><path d="M12.6 131.8H14.0" stroke="#888" stroke-width="1" stroke-dasharray="none"/></g><g opacity="1"><rect x="9.9" y="140.3" width="153.6" height="11.5" fill="#fff" stroke="#444" stroke-width="1.1"/><path d="M16.7 140.3V151.8 M29.6 140.3V151.8 M102.6 140.3V151.8 M116.5 140.3V151.8 M124 140.3V151.8 M139.7 140.3V151.8" stroke="#555" stroke-width="0.9"/><path d="M30.6 143.4H101.5" stroke="#777" stroke-width="1.0" stroke-dasharray="5 1 3 1 7 1 4 1 6 1"/><path d="M30.6 146.1H101.5" stroke="#777" stroke-width="1.0" stroke-dasharray="5 1 3 1 7 1 4 1 6 1"/><path d="M30.6 148.8H88.0" stroke="#777" stroke-width="1.0" stroke-dasharray="5 1 3 1 7 1 4 1 6 1"/><path d="M19.0 146.1H27.0" stroke="#777" stroke-width="1.1" stroke-dasharray="none"/><path d="M106.0 146.1H113.0" stroke="#666" stroke-width="1.1" stroke-dasharray="none"/><path d="M118.5 146.1H122.0" stroke="#999" stroke-width="1" stroke-dasharray="none"/><path d="M12.6 146.1H14.0" stroke="#888" stroke-width="1" stroke-dasharray="none"/></g><g opacity="1"><rect x="9.9" y="154.4" width="153.6" height="11.7" fill="#fff" stroke="#444" stroke-width="1.1"/><path d="M16.7 154.4V166.1 M29.6 154.4V166.1 M102.6 154.4V166.1 M116.5 154.4V166.1 M124 154.4V166.1 M139.7 154.4V166.1" stroke="#555" stroke-width="0.9"/><path d="M30.6 157.6H101.5" stroke="#777" stroke-width="1.0" stroke-dasharray="5 1 3 1 7 1 4 1 6 1"/><path d="M30.6 160.2H101.5" stroke="#777" stroke-width="1.0" stroke-dasharray="5 1 3 1 7 1 4 1 6 1"/><path d="M30.6 162.9H88.0" stroke="#777" stroke-width="1.0" stroke-dasharray="5 1 3 1 7 1 4 1 6 1"/><path d="M19.0 160.2H27.0" stroke="#777" stroke-width="1.1" stroke-dasharray="none"/><path d="M106.0 160.2H113.0" stroke="#666" stroke-width="1.1" stroke-dasharray="none"/><path d="M118.5 160.2H122.0" stroke="#999" stroke-width="1" stroke-dasharray="none"/><path d="M12.6 160.2H14.0" stroke="#888" stroke-width="1" stroke-dasharray="none"/></g><g opacity="1"><rect x="9.9" y="168.8" width="153.6" height="13.9" fill="#fff" stroke="#444" stroke-width="1.1"/><path d="M16.7 168.8V182.7 M29.6 168.8V182.7 M102.6 168.8V182.7 M116.5 168.8V182.7 M124 168.8V182.7 M139.7 168.8V182.7" stroke="#555" stroke-width="0.9"/><path d="M30.6 171.7H101.5" stroke="#777" stroke-width="1.0" stroke-dasharray="5 1 3 1 7 1 4 1 6 1"/><path d="M30.6 174.4H101.5" stroke="#777" stroke-width="1.0" stroke-dasharray="5 1 3 1 7 1 4 1 6 1"/><path d="M30.6 177.1H101.5" stroke="#777" stroke-width="1.0" stroke-dasharray="5 1 3 1 7 1 4 1 6 1"/><path d="M30.6 179.8H71.0" stroke="#777" stroke-width="1.0" stroke-dasharray="5 1 3 1 7 1 4 1 6 1"/><path d="M19.0 175.8H27.0" stroke="#777" stroke-width="1.1" stroke-dasharray="none"/><path d="M106.0 175.8H113.0" stroke="#666" stroke-width="1.1" stroke-dasharray="none"/><path d="M118.5 175.8H122.0" stroke="#999" stroke-width="1" stroke-dasharray="none"/><path d="M12.6 175.8H14.0" stroke="#888" stroke-width="1" stroke-dasharray="none"/></g><g opacity="0.35"><rect x="9.9" y="186.1" width="153.6" height="11.3" fill="#fff" stroke="#444" stroke-width="1.1"/><path d="M16.7 186.1V197.4 M29.6 186.1V197.4 M102.6 186.1V197.4 M116.5 186.1V197.4 M124 186.1V197.4 M139.7 186.1V197.4" stroke="#555" stroke-width="0.9"/><path d="M30.6 189.1H101.5" stroke="#777" stroke-width="1.0" stroke-dasharray="5 1 3 1 7 1 4 1 6 1"/><path d="M30.6 191.8H101.5" stroke="#777" stroke-width="1.0" stroke-dasharray="5 1 3 1 7 1 4 1 6 1"/><path d="M30.6 194.4H88.0" stroke="#777" stroke-width="1.0" stroke-dasharray="5 1 3 1 7 1 4 1 6 1"/><path d="M19.0 191.8H27.0" stroke="#777" stroke-width="1.1" stroke-dasharray="none"/><path d="M106.0 191.8H113.0" stroke="#666" stroke-width="1.1" stroke-dasharray="none"/><path d="M118.5 191.8H122.0" stroke="#999" stroke-width="1" stroke-dasharray="none"/><path d="M12.6 191.8H14.0" stroke="#888" stroke-width="1" stroke-dasharray="none"/></g><g opacity="0.3"><rect x="9.9" y="201" width="153.6" height="14.3" fill="#fff" stroke="#444" stroke-width="1.1"/><path d="M16.7 201V215.3 M29.6 201V215.3 M102.6 201V215.3 M116.5 201V215.3 M124 201V215.3 M139.7 201V215.3" stroke="#555" stroke-width="0.9"/><path d="M30.6 204.1H101.5" stroke="#777" stroke-width="1.0" stroke-dasharray="5 1 3 1 7 1 4 1 6 1"/><path d="M30.6 206.8H101.5" stroke="#777" stroke-width="1.0" stroke-dasharray="5 1 3 1 7 1 4 1 6 1"/><path d="M30.6 209.5H101.5" stroke="#777" stroke-width="1.0" stroke-dasharray="5 1 3 1 7 1 4 1 6 1"/><path d="M30.6 212.2H71.0" stroke="#777" stroke-width="1.0" stroke-dasharray="5 1 3 1 7 1 4 1 6 1"/><path d="M19.0 208.2H27.0" stroke="#777" stroke-width="1.1" stroke-dasharray="none"/><path d="M106.0 208.2H113.0" stroke="#666" stroke-width="1.1" stroke-dasharray="none"/><path d="M118.5 208.2H122.0" stroke="#999" stroke-width="1" stroke-dasharray="none"/><path d="M12.6 208.2H14.0" stroke="#888" stroke-width="1" stroke-dasharray="none"/></g><path d="M82.0 230.4H92.0" stroke="#999" stroke-width="1" stroke-dasharray="none"/></svg></div>
<div class="a " style="left:1564px;top:804.5px;width:310px;height:239px;background:#ebf0f5;border:2px solid #b9c6d6;border-radius:9px;overflow:hidden;"><svg class="a" style="left:62px;top:0px" width="183" height="236" viewBox="0 0 183 236"><rect width="183" height="240" fill="#fff"/><path d="M19.0 15.9H86.9" stroke="#222" stroke-width="2.0" stroke-dasharray="6 1 3 1 8 1 4 1 5 1" opacity="1"/><path d="M19.0 24.0H109.1" stroke="#222" stroke-width="2.2" stroke-dasharray="6 1 3 1 8 1 4 1 5 1" opacity="1"/><path d="M19.0 31.2H165.9" stroke="#666" stroke-width="0.9" stroke-dasharray="none" opacity="1"/><path d="M25.2 37.1H55.2" stroke="#222" stroke-width="1.4" stroke-dasharray="6 1 3 1 8 1 4 1 5 1" opacity="1"/><path d="M19.0 37.1H20.6" stroke="#222" stroke-width="1.4" stroke-dasharray="none" opacity="1"/><path d="M25.2 44.0H37.3" stroke="#222" stroke-width="1.4" stroke-dasharray="6 1 3 1 8 1 4 1 5 1" opacity="1"/><path d="M19.0 44.0H20.6" stroke="#222" stroke-width="1.4" stroke-dasharray="none" opacity="1"/><path d="M25.2 51.0H52.6" stroke="#222" stroke-width="1.4" stroke-dasharray="6 1 3 1 8 1 4 1 5 1" opacity="1"/><path d="M19.0 51.0H20.6" stroke="#222" stroke-width="1.4" stroke-dasharray="none" opacity="1"/><path d="M25.2 57.7H40.9" stroke="#222" stroke-width="1.4" stroke-dasharray="6 1 3 1 8 1 4 1 5 1" opacity="1"/><path d="M19.0 57.7H20.6" stroke="#222" stroke-width="1.4" stroke-dasharray="none" opacity="1"/><path d="M25.2 66.3H53.6" stroke="#222" stroke-width="1.4" stroke-dasharray="6 1 3 1 8 1 4 1 5 1" opacity="1"/><path d="M19.0 66.3H20.6" stroke="#222" stroke-width="1.4" stroke-dasharray="none" opacity="1"/><path d="M25.2 69.8H51.2" stroke="#222" stroke-width="1.4" stroke-dasharray="6 1 3 1 8 1 4 1 5 1" opacity="1"/><path d="M25.2 73.2H47.2" stroke="#222" stroke-width="1.4" stroke-dasharray="6 1 3 1 8 1 4 1 5 1" opacity="1"/><path d="M25.2 80.0H42.7" stroke="#222" stroke-width="1.4" stroke-dasharray="6 1 3 1 8 1 4 1 5 1" opacity="1"/><path d="M19.0 80.0H20.6" stroke="#222" stroke-width="1.4" stroke-dasharray="none" opacity="1"/><path d="M25.2 120.0H49.6" stroke="#222" stroke-width="1.4" stroke-dasharray="6 1 3 1 8 1 4 1 5 1" opacity="1"/><path d="M19.0 120.0H20.6" stroke="#222" stroke-width="1.4" stroke-dasharray="none" opacity="1"/><path d="M25.2 128.4H47.2" stroke="#222" stroke-width="1.4" stroke-dasharray="6 1 3 1 8 1 4 1 5 1" opacity="1"/><path d="M19.0 128.4H20.6" stroke="#222" stroke-width="1.4" stroke-dasharray="none" opacity="1"/><path d="M25.2 131.9H50.0" stroke="#222" stroke-width="1.4" stroke-dasharray="6 1 3 1 8 1 4 1 5 1" opacity="1"/><path d="M25.2 143.8H51.8" stroke="#222" stroke-width="1.4" stroke-dasharray="6 1 3 1 8 1 4 1 5 1" opacity="1"/><path d="M19.0 143.8H20.6" stroke="#222" stroke-width="1.4" stroke-dasharray="none" opacity="1"/><path d="M25.2 152.8H131.5" stroke="#222" stroke-width="1.4" stroke-dasharray="6 1 3 1 8 1 4 1 5 1" opacity="1"/><path d="M19.0 152.8H20.6" stroke="#222" stroke-width="1.4" stroke-dasharray="none" opacity="1"/><path d="M25.2 166.3H49.2" stroke="#222" stroke-width="1.4" stroke-dasharray="6 1 3 1 8 1 4 1 5 1" opacity="1"/><path d="M19.0 166.3H20.6" stroke="#222" stroke-width="1.4" stroke-dasharray="none" opacity="1"/><path d="M25.2 178.2H56.7" stroke="#222" stroke-width="1.4" stroke-dasharray="6 1 3 1 8 1 4 1 5 1" opacity="1"/><path d="M19.0 178.2H20.6" stroke="#222" stroke-width="1.4" stroke-dasharray="none" opacity="1"/><path d="M61.1 51.0H160.3" stroke="#777" stroke-width="1.1" stroke-dasharray="6 1 3 1 8 1 4 1 5 1" opacity="1"/><path d="M61.1 57.7H161.3" stroke="#777" stroke-width="1.1" stroke-dasharray="6 1 3 1 8 1 4 1 5 1" opacity="1"/><path d="M61.1 61.3H66.1" stroke="#777" stroke-width="1.1" stroke-dasharray="6 1 3 1 8 1 4 1 5 1" opacity="1"/><path d="M61.1 66.3H75.0" stroke="#777" stroke-width="1.1" stroke-dasharray="6 1 3 1 8 1 4 1 5 1" opacity="1"/><path d="M67.5 69.8H163.9" stroke="#777" stroke-width="1.1" stroke-dasharray="6 1 3 1 8 1 4 1 5 1" opacity="1"/><path d="M67.5 73.2H131.2" stroke="#777" stroke-width="1.1" stroke-dasharray="6 1 3 1 8 1 4 1 5 1" opacity="1"/><path d="M61.1 80.0H75.0" stroke="#777" stroke-width="1.1" stroke-dasharray="6 1 3 1 8 1 4 1 5 1" opacity="1"/><path d="M67.5 83.5H151.4" stroke="#777" stroke-width="1.1" stroke-dasharray="6 1 3 1 8 1 4 1 5 1" opacity="1"/><path d="M67.5 87.1H135.9" stroke="#777" stroke-width="1.1" stroke-dasharray="6 1 3 1 8 1 4 1 5 1" opacity="1"/><path d="M67.5 90.5H92.3" stroke="#777" stroke-width="1.1" stroke-dasharray="6 1 3 1 8 1 4 1 5 1" opacity="1"/><path d="M67.5 93.7H123.0" stroke="#777" stroke-width="1.1" stroke-dasharray="6 1 3 1 8 1 4 1 5 1" opacity="1"/><path d="M67.5 97.4H115.1" stroke="#777" stroke-width="1.1" stroke-dasharray="6 1 3 1 8 1 4 1 5 1" opacity="1"/><path d="M67.5 101.0H162.3" stroke="#777" stroke-width="1.1" stroke-dasharray="6 1 3 1 8 1 4 1 5 1" opacity="1"/><path d="M67.5 104.4H127.0" stroke="#777" stroke-width="1.1" stroke-dasharray="6 1 3 1 8 1 4 1 5 1" opacity="1"/><path d="M67.5 107.9H165.9" stroke="#777" stroke-width="1.1" stroke-dasharray="6 1 3 1 8 1 4 1 5 1" opacity="1"/><path d="M67.5 111.3H110.3" stroke="#777" stroke-width="1.1" stroke-dasharray="6 1 3 1 8 1 4 1 5 1" opacity="1"/><path d="M67.5 114.7H145.0" stroke="#777" stroke-width="1.1" stroke-dasharray="6 1 3 1 8 1 4 1 5 1" opacity="1"/><path d="M61.1 120.0H75.0" stroke="#777" stroke-width="1.1" stroke-dasharray="6 1 3 1 8 1 4 1 5 1" opacity="1"/><path d="M67.5 123.4H164.9" stroke="#777" stroke-width="1.1" stroke-dasharray="6 1 3 1 8 1 4 1 5 1" opacity="1"/><path d="M61.1 128.4H75.0" stroke="#777" stroke-width="1.1" stroke-dasharray="6 1 3 1 8 1 4 1 5 1" opacity="1"/><path d="M67.5 131.9H155.4" stroke="#777" stroke-width="1.1" stroke-dasharray="6 1 3 1 8 1 4 1 5 1" opacity="1"/><path d="M67.5 135.5H158.9" stroke="#777" stroke-width="1.1" stroke-dasharray="6 1 3 1 8 1 4 1 5 1" opacity="1"/><path d="M67.5 138.9H90.3" stroke="#777" stroke-width="1.1" stroke-dasharray="6 1 3 1 8 1 4 1 5 1" opacity="1"/><path d="M61.1 143.8H163.9" stroke="#777" stroke-width="1.1" stroke-dasharray="6 1 3 1 8 1 4 1 5 1" opacity="1"/><path d="M61.1 147.4H118.7" stroke="#777" stroke-width="1.1" stroke-dasharray="6 1 3 1 8 1 4 1 5 1" opacity="1"/><path d="M61.1 166.3H75.0" stroke="#777" stroke-width="1.1" stroke-dasharray="6 1 3 1 8 1 4 1 5 1" opacity="1"/><path d="M67.5 169.8H157.3" stroke="#777" stroke-width="1.1" stroke-dasharray="6 1 3 1 8 1 4 1 5 1" opacity="1"/><path d="M67.5 173.4H96.4" stroke="#777" stroke-width="1.1" stroke-dasharray="6 1 3 1 8 1 4 1 5 1" opacity="1"/><path d="M61.1 178.2H75.0" stroke="#777" stroke-width="1.1" stroke-dasharray="6 1 3 1 8 1 4 1 5 1" opacity="1"/><path d="M67.5 181.7H155.0" stroke="#777" stroke-width="1.1" stroke-dasharray="6 1 3 1 8 1 4 1 5 1" opacity="1"/><circle cx="61.9" cy="69.8" r="0.7" fill="#444"/><circle cx="61.9" cy="83.5" r="0.7" fill="#444"/><circle cx="61.9" cy="87.1" r="0.7" fill="#444"/><circle cx="61.9" cy="90.5" r="0.7" fill="#444"/><circle cx="61.9" cy="93.7" r="0.7" fill="#444"/><circle cx="61.9" cy="97.4" r="0.7" fill="#444"/><circle cx="61.9" cy="101.0" r="0.7" fill="#444"/><circle cx="61.9" cy="107.9" r="0.7" fill="#444"/><circle cx="61.9" cy="114.7" r="0.7" fill="#444"/><circle cx="61.9" cy="123.4" r="0.7" fill="#444"/><circle cx="61.9" cy="131.9" r="0.7" fill="#444"/><circle cx="61.9" cy="169.8" r="0.7" fill="#444"/><circle cx="61.9" cy="181.7" r="0.7" fill="#444"/><path d="M19.0 159.7H45.2" stroke="#bbb" stroke-width="1" stroke-dasharray="none" opacity="1"/><path d="M25.2 187.1H43.3" stroke="#999" stroke-width="1" stroke-dasharray="6 1 3 1 8 1 4 1 5 1" opacity="0.5"/><path d="M67.5 187.1H163.9" stroke="#999" stroke-width="1" stroke-dasharray="6 1 3 1 8 1 4 1 5 1" opacity="0.5"/><path d="M67.5 190.7H164.7" stroke="#999" stroke-width="1" stroke-dasharray="6 1 3 1 8 1 4 1 5 1" opacity="0.5"/><path d="M67.5 193.8H86.5" stroke="#999" stroke-width="1" stroke-dasharray="6 1 3 1 8 1 4 1 5 1" opacity="0.5"/><path d="M25.2 199.0H51.2" stroke="#999" stroke-width="1" stroke-dasharray="6 1 3 1 8 1 4 1 5 1" opacity="0.5"/><path d="M25.2 202.6H43.3" stroke="#999" stroke-width="1" stroke-dasharray="6 1 3 1 8 1 4 1 5 1" opacity="0.5"/></svg></div>
<div class="a " style="left:1242px;top:990.5px;width:230px;height:44px;background:rgba(250,251,253,.93);border-radius:6px;"></div>
<span class="a t" id="t85" style="top:997.16px;font-size:24.8px;line-height:27.702px;color:#000;left:1252px;letter-spacing:-0.248px;">Bill of quantities.pdf</span>
<div class="a " style="left:1574px;top:990.5px;width:290px;height:44px;background:rgba(250,251,253,.93);border-radius:6px;"></div>
<span class="a t" id="t86" style="top:997.16px;font-size:24.8px;line-height:27.702px;color:#000;left:1584.7px;letter-spacing:-0.452px;">Instructional sheet on w...</span>
<div class="a " style="left:1216px;top:1060.5px;width:674.5px;height:89.5px;border:6px solid #ff8500;border-radius:11px;"></div>
<div class="a " style="left:1232px;top:1074.5px;width:642px;height:59px;background:#fff;border:2px solid #b9c6d6;border-radius:5px;"></div>
<div class="a " style="left:1298px;top:1075.5px;width:56px;height:56px;background:#ff8500;border-radius:28px;"></div>
<span class="a t" id="t87" style="top:1087.34px;font-size:29.9px;line-height:33.398px;color:#000;left:1325.8px;transform:translateX(-50%);">3</span>
<span class="a t" id="t88" style="top:1087.94px;font-size:28.8px;line-height:32.170px;color:#000;left:1423px;letter-spacing:-0.736px;">Show all attachments</span>
<div class="a " style="left:1232px;top:1164.5px;width:642px;height:120px;border:4px dashed #bcc8d6;border-radius:7px;"></div>
<span class="a t" id="t89" style="top:1203.94px;font-size:28.8px;line-height:32.170px;color:#787878;left:1465px;letter-spacing:-0.751px;">Drag files here</span>
<svg class="a" style="left:1080px;top:871px;" width="200" height="200" viewBox="0 0 200 200"><path d="M31.5 27.5 L143 152" stroke="#ff8500" stroke-width="12.5" stroke-linecap="round"/><path d="M161.5 176.5 L122 163.5 L155 135.5Z" fill="#ff8500" stroke="#ff8500" stroke-width="2" stroke-linejoin="round"/></svg>
<div class="a " style="left:0px;top:1202px;width:1966px;height:26px;background:linear-gradient(to bottom,rgba(255,255,255,0),rgba(255,255,255,.75));"></div>
</div>
<div class="a " style="left:2184px;top:1477px;width:240px;height:60px;background:#c2dcf0;border-radius:9px;"></div>
<span class="a t" id="t90" style="top:1491.94px;font-size:28.8px;line-height:32.170px;color:#fff;left:2304px;transform:translateX(-50%);letter-spacing:-2.160px;">Save</span>
<div class="a " style="left:2444px;top:1477px;width:240px;height:60px;background:#fff;border:2px solid #b9c6d6;border-radius:9px;"></div>
<span class="a t" id="t91" style="top:1491.94px;font-size:28.8px;line-height:32.170px;color:#000;left:2564px;transform:translateX(-50%);letter-spacing:-1.125px;">Close</span>
<div class="a " style="left:3356px;top:0px;width:2px;height:1608px;background:rgba(255,255,255,.25);"></div>
<svg class="a" style="left:0px;top:1572px;" width="32" height="36" viewBox="0 0 32 36"><path d="M0 0 C0 20 8 34 31 36 L0 36Z" fill="#0d0f10"/><path d="M0.6 0 C0.6 20 8.6 33.6 31 35.6" fill="none" stroke="#4a5464" stroke-width="1.2"/></svg>
<svg class="a" style="left:3326px;top:1562px;" width="32" height="46" viewBox="0 0 32 46"><path d="M32 0 C32 26 22 42 2 46 L32 46Z" fill="#0b1214"/><path d="M31.4 0 C31.4 26 21.4 41.6 2 45.4" fill="none" stroke="#e8e8e8" stroke-width="1.2"/></svg>
</body></html>
